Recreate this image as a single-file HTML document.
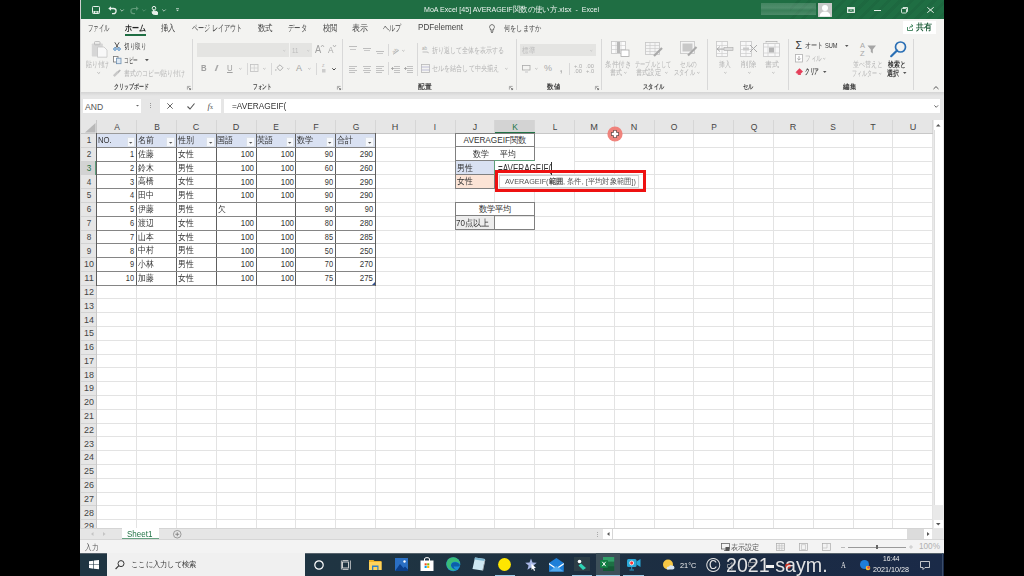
<!DOCTYPE html><html><head><meta charset="utf-8"><style>
*{margin:0;padding:0;box-sizing:border-box}
html,body{width:1024px;height:576px;overflow:hidden;background:#000;font-family:"Liberation Sans",sans-serif;color:#333}
.a{position:absolute}
.t{position:absolute;white-space:nowrap}
svg{position:absolute;overflow:visible}
</style></head><body>
<div class="a" style="left:80.00px;top:0.00px;width:864.00px;height:576.00px;background:#f3f3f1"></div>
<div class="a" style="left:80.00px;top:0.00px;width:864.00px;height:19.00px;background:#1f6e43"></div>
<div class="a" style="left:790.00px;top:0.00px;width:154.00px;height:19.00px;background:repeating-linear-gradient(135deg,rgba(0,0,0,0) 0 5px,rgba(0,0,0,0.05) 5px 8px)"></div>
<svg style="left:92.00px;top:6.00px;" width="8" height="8" viewBox="0 0 8 8"><rect x="0.5" y="0.5" width="7" height="7" rx="0.8" fill="none" stroke="#e8f0ea" stroke-width="1"/><rect x="1.5" y="5" width="5" height="2.5" fill="#e8f0ea"/><rect x="3" y="5.6" width="0.9" height="1.2" fill="#1f6e43"/><rect x="4.3" y="5.6" width="0.9" height="1.2" fill="#1f6e43"/></svg>
<svg style="left:108.00px;top:6.00px;" width="9" height="9" viewBox="0 0 9 9"><path d="M2.5 2.5 H5.5 A2.6 2.6 0 0 1 5.5 7.7 H4" fill="none" stroke="#e8f0ea" stroke-width="1.3"/><path d="M0.3 2.5 L3 0.2 L3 4.8 Z" fill="#e8f0ea"/></svg>
<svg style="left:120.00px;top:8.50px;" width="4" height="3" viewBox="0 0 4 3"><path d="M0.3 0.5 L2 2.2 L3.7 0.5" fill="none" stroke="#cfe0d5" stroke-width="0.8"/></svg>
<svg style="left:130.00px;top:6.00px;" width="9" height="9" viewBox="0 0 9 9"><path d="M6.5 2.5 H3.5 A2.6 2.6 0 0 0 3.5 7.7 H5" fill="none" stroke="#5f9a78" stroke-width="1.2"/><path d="M8.7 2.5 L6 0.2 L6 4.8 Z" fill="#5f9a78"/></svg>
<svg style="left:142.00px;top:8.50px;" width="4" height="3" viewBox="0 0 4 3"><path d="M0.3 0.5 L2 2.2 L3.7 0.5" fill="none" stroke="#5f9a78" stroke-width="0.8"/></svg>
<svg style="left:150.50px;top:5.50px;" width="7" height="9" viewBox="0 0 7 9"><circle cx="3" cy="2.2" r="1.8" fill="none" stroke="#e8f0ea" stroke-width="1"/><path d="M2.4 3.5 V8 M1 5.5 Q1 8.5 3.5 8.5 H6.5 V6 Q5 5 3 5" fill="#e8f0ea" stroke="#e8f0ea" stroke-width="1"/></svg>
<svg style="left:162.00px;top:8.50px;" width="4" height="3" viewBox="0 0 4 3"><path d="M0.3 0.5 L2 2.2 L3.7 0.5" fill="none" stroke="#cfe0d5" stroke-width="0.8"/></svg>
<svg style="left:175.50px;top:8.00px;" width="3" height="4" viewBox="0 0 3 4"><rect x="0" y="0" width="3" height="0.7" fill="#cfe0d5"/><path d="M0 1.8 H3 L1.5 3.3 Z" fill="#cfe0d5"/></svg>
<div class="t" id="m0" style="left:424.00px;top:4.74px;font-size:7.6px;line-height:9.12px;color:#f0f5f2;;transform-origin:0 50%;transform:scaleX(0.9309);">MoA Excel [45] AVERAGEIF関数の使い方.xlsx&nbsp; -&nbsp; Excel</div>
<div class="a" style="left:761.00px;top:3.00px;width:55.00px;height:12.00px;background:linear-gradient(180deg,rgba(255,255,255,0.16),rgba(255,255,255,0.22) 40%,rgba(255,255,255,0.12) 60%,rgba(255,255,255,0.2));filter:blur(0.5px)"></div>
<div class="a" style="left:817.50px;top:3.00px;width:14.00px;height:13.50px;background:#c9c9c9"></div>
<svg style="left:817.50px;top:3.00px;" width="14" height="13.5" viewBox="0 0 14 13.5"><circle cx="7" cy="5" r="3" fill="#fff"/><path d="M1.5 13.5 Q2 8.5 7 8.5 Q12 8.5 12.5 13.5 Z" fill="#fff"/></svg>
<svg style="left:847.00px;top:7.00px;" width="8" height="6" viewBox="0 0 8 6"><rect x="0.5" y="0.5" width="7" height="5" fill="#e8f0ea" stroke="#e8f0ea" stroke-width="0.9"/><rect x="1.3" y="2.3" width="5.4" height="2.5" fill="#1f6e43"/><path d="M2.6 4 L4 2.8 L5.4 4" fill="none" stroke="#e8f0ea" stroke-width="0.7"/></svg>
<div class="a" style="left:874.00px;top:9.50px;width:7.00px;height:0.90px;background:#e8f0ea"></div>
<svg style="left:900.50px;top:7.00px;" width="7" height="6" viewBox="0 0 7 6"><rect x="0.5" y="1.5" width="5" height="4.5" rx="0.8" fill="none" stroke="#e8f0ea" stroke-width="0.9"/><path d="M1.8 0.5 H6.5 V4.8" fill="none" stroke="#e8f0ea" stroke-width="0.9"/></svg>
<svg style="left:927.00px;top:7.00px;" width="7" height="6" viewBox="0 0 7 6"><path d="M0.3 0.3 L6.7 5.7 M6.7 0.3 L0.3 5.7" stroke="#e8f0ea" stroke-width="1"/></svg>
<div class="t" id="m1" style="left:87.80px;top:23.20px;font-size:8.5px;line-height:10.20px;color:#444;font-weight:normal;transform-origin:0 50%;transform:scaleX(0.5972);">ファイル</div>
<div class="t" id="m2" style="left:125.30px;top:23.20px;font-size:8.5px;line-height:10.20px;color:#222;font-weight:bold;transform-origin:0 50%;transform:scaleX(0.7778);">ホーム</div>
<div class="t" id="m3" style="left:160.50px;top:23.20px;font-size:8.5px;line-height:10.20px;color:#444;font-weight:normal;transform-origin:0 50%;transform:scaleX(0.8056);">挿入</div>
<div class="t" id="m4" style="left:191.70px;top:23.20px;font-size:8.5px;line-height:10.20px;color:#444;font-weight:normal;transform-origin:0 50%;transform:scaleX(0.6757);">ページ レイアウト</div>
<div class="t" id="m5" style="left:257.70px;top:23.20px;font-size:8.5px;line-height:10.20px;color:#444;font-weight:normal;transform-origin:0 50%;transform:scaleX(0.8333);">数式</div>
<div class="t" id="m6" style="left:288.00px;top:23.20px;font-size:8.5px;line-height:10.20px;color:#444;font-weight:normal;transform-origin:0 50%;transform:scaleX(0.7037);">データ</div>
<div class="t" id="m7" style="left:322.50px;top:23.20px;font-size:8.5px;line-height:10.20px;color:#444;font-weight:normal;transform-origin:0 50%;transform:scaleX(0.8056);">校閲</div>
<div class="t" id="m8" style="left:352.00px;top:23.20px;font-size:8.5px;line-height:10.20px;color:#444;font-weight:normal;transform-origin:0 50%;transform:scaleX(0.8889);">表示</div>
<div class="t" id="m9" style="left:382.50px;top:23.20px;font-size:8.5px;line-height:10.20px;color:#444;font-weight:normal;transform-origin:0 50%;transform:scaleX(0.6852);">ヘルプ</div>
<div class="a" style="left:125.30px;top:34.00px;width:21.00px;height:1.60px;background:#1f6e43"></div>
<div class="t" id="m10" style="left:418.00px;top:23.32px;font-size:8.3px;line-height:9.96px;color:#444;;transform-origin:0 50%;transform:scaleX(0.9783);">PDFelement</div>
<svg style="left:489.00px;top:24.00px;" width="6" height="9" viewBox="0 0 6 9"><path d="M3 0.6 A2.4 2.4 0 0 1 4.6 4.8 V6 H1.4 V4.8 A2.4 2.4 0 0 1 3 0.6 Z" fill="none" stroke="#555" stroke-width="0.8"/><path d="M1.6 7.2 H4.4 M2 8.4 H4" stroke="#555" stroke-width="0.8"/></svg>
<div class="t" id="m11" style="left:503.75px;top:23.50px;font-size:8px;line-height:9.60px;color:#444;;transform-origin:0 50%;transform:scaleX(0.7812);">何をしますか</div>
<div class="a" style="left:903.00px;top:20.50px;width:33.00px;height:13.50px;background:#fff"></div>
<svg style="left:907.00px;top:23.50px;" width="7" height="7" viewBox="0 0 7 7"><path d="M0.5 3 V6.5 H5.5 V4.5" fill="none" stroke="#1f6e43" stroke-width="0.8"/><path d="M2.5 4.5 Q2.7 1.8 5.5 1.8 M4.3 0.4 L6 1.8 L4.3 3.2" fill="none" stroke="#1f6e43" stroke-width="0.8"/></svg>
<div class="t" id="m12" style="left:916.00px;top:22.20px;font-size:8.5px;line-height:10.20px;color:#1f5e3b;font-weight:bold;transform-origin:0 50%;transform:scaleX(0.8889);">共有</div>
<svg style="left:90.50px;top:41.00px;" width="17" height="16.5" viewBox="0 0 17 16.5"><rect x="0.8" y="2.5" width="11" height="13" rx="0.8" fill="#d6d6d6"/><rect x="3.5" y="0.6" width="5.5" height="3.2" rx="0.8" fill="none" stroke="#bdbdbd" stroke-width="1"/><path d="M6.5 6 H13 L16 9 V16.2 H6.5 Z" fill="#f8f8f8" stroke="#c5c5c5" stroke-width="0.8"/></svg>
<div class="t" id="m13" style="left:86.00px;top:59.90px;font-size:7.5px;line-height:9.00px;color:#b0b0b0;;transform-origin:0 50%;transform:scaleX(0.7281);">貼り付け</div>
<svg style="left:96.80px;top:72.15px;" width="3.4" height="1.7" viewBox="0 0 3.4 1.7"><path d="M0.3 0.3 L1.7 1.5 L3.1 0.3" fill="none" stroke="#aaa" stroke-width="0.8"/></svg>
<svg style="left:113.00px;top:42.00px;" width="8" height="8.5" viewBox="0 0 8 8.5"><path d="M1.8 0.3 L5.2 5.8 M6.2 0.3 L2.8 5.8" stroke="#444" stroke-width="0.9"/><circle cx="2" cy="7" r="1.3" fill="none" stroke="#3c7fc0" stroke-width="0.9"/><circle cx="6" cy="7" r="1.3" fill="none" stroke="#3c7fc0" stroke-width="0.9"/></svg>
<div class="t" id="m14" style="left:123.80px;top:41.70px;font-size:7.5px;line-height:9.00px;color:#3a3a3a;;transform-origin:0 50%;transform:scaleX(0.6937);">切り取り</div>
<svg style="left:113.00px;top:55.50px;" width="8.5" height="8" viewBox="0 0 8.5 8"><rect x="0.5" y="0.5" width="4.5" height="5.5" fill="#fff" stroke="#777" stroke-width="0.8"/><rect x="3.5" y="2.2" width="4.5" height="5.5" fill="#dde8f3" stroke="#6f8fb0" stroke-width="0.8"/></svg>
<div class="t" id="m15" style="left:123.80px;top:55.50px;font-size:7.5px;line-height:9.00px;color:#3a3a3a;;transform-origin:0 50%;transform:scaleX(0.5833);">コピー</div>
<svg style="left:144.50px;top:59.00px;" width="4" height="2.5" viewBox="0 0 4 2.5"><path d="M0 0 H3.8 L1.9 2.2 Z" fill="#555"/></svg>
<svg style="left:113.00px;top:68.50px;" width="8.5" height="8" viewBox="0 0 8.5 8"><path d="M0.8 7.2 L4.8 3.2" stroke="#c8c8c8" stroke-width="2.4"/><path d="M4.2 2.6 L6.8 0.5 L7.8 1.5 L5.4 4.2 Z" fill="#b9b9b9"/></svg>
<div class="t" id="m16" style="left:123.80px;top:69.40px;font-size:7.5px;line-height:9.00px;color:#b4b4b4;;transform-origin:0 50%;transform:scaleX(0.7390);">書式のコピー/貼り付け</div>
<div class="t" id="m17" style="left:114.30px;top:82.88px;font-size:7.2px;line-height:8.64px;color:#444;font-weight:bold;transform-origin:0 50%;transform:scaleX(0.7041);">クリップボード</div>
<svg style="left:186.70px;top:86.00px;" width="4" height="4" viewBox="0 0 4 4"><path d="M0.4 3.6 V0.4 H3.6" fill="none" stroke="#8a8a8a" stroke-width="0.7"/><path d="M1.4 1.4 L3.6 3.6 M2.2 3.6 H3.6 V2.2" fill="none" stroke="#666" stroke-width="0.8"/></svg>
<div class="a" style="left:192.20px;top:39.00px;width:0.90px;height:50.50px;background:#d8d8d8"></div>
<div class="a" style="left:197.00px;top:43.40px;width:91.70px;height:13.40px;background:#e4e4e2"></div>
<svg style="left:282.70px;top:49.85px;" width="2.6" height="1.3" viewBox="0 0 2.6 1.3"><path d="M0.3 0.3 L1.3 1.1 L2.3000000000000003 0.3" fill="none" stroke="#c0c0c0" stroke-width="0.8"/></svg>
<div class="a" style="left:289.70px;top:43.40px;width:22.30px;height:13.40px;background:#e4e4e2"></div>
<div class="t" id="m18" style="left:292.00px;top:45.70px;font-size:7.5px;line-height:9.00px;color:#bcbcbc;;transform-origin:0 50%;transform:scaleX(0.8125);">11</div>
<svg style="left:306.70px;top:49.85px;" width="2.6" height="1.3" viewBox="0 0 2.6 1.3"><path d="M0.3 0.3 L1.3 1.1 L2.3000000000000003 0.3" fill="none" stroke="#c0c0c0" stroke-width="0.8"/></svg>
<div class="t" id="m19" style="left:315.00px;top:44.00px;font-size:10px;line-height:12.00px;color:#a0a0a0;;transform-origin:0 50%;transform:scaleX(0.9286);">A</div>
<svg style="left:320.50px;top:44.50px;" width="3" height="2" viewBox="0 0 3 2"><path d="M0 2 L1.5 0 L3 2" fill="none" stroke="#a0a0a0" stroke-width="0.7"/></svg>
<div class="t" id="m20" style="left:328.30px;top:45.10px;font-size:9px;line-height:10.80px;color:#a8a8a8;;transform-origin:0 50%;transform:scaleX(0.9167);">A</div>
<svg style="left:333.00px;top:44.50px;" width="3" height="2" viewBox="0 0 3 2"><path d="M0 0 L1.5 2 L3 0" fill="none" stroke="#a0a0a0" stroke-width="0.7"/></svg>
<div class="t" id="m21" style="left:200.70px;top:63.20px;font-size:8.5px;line-height:10.20px;color:#a0a0a0;font-weight:bold;transform-origin:0 50%;transform:scaleX(0.9167);">B</div>
<div class="t" id="m22" style="left:214.00px;top:63.20px;font-size:8.5px;line-height:10.20px;color:#a8a8a8;font-style:italic;transform-origin:0 50%;transform:scaleX(2.0000);">I</div>
<div class="t" id="m23" style="left:227.00px;top:62.90px;font-size:8.5px;line-height:10.20px;color:#a0a0a0;text-decoration:underline;transform-origin:0 50%;transform:scaleX(0.9167);">U</div>
<svg style="left:238.60px;top:67.80px;" width="2.8" height="1.4" viewBox="0 0 2.8 1.4"><path d="M0.3 0.3 L1.4 1.2 L2.5 0.3" fill="none" stroke="#b0b0b0" stroke-width="0.8"/></svg>
<div class="a" style="left:246.60px;top:63.00px;width:0.90px;height:12.00px;background:#d8d8d8"></div>
<svg style="left:249.60px;top:64.00px;" width="8.5" height="8" viewBox="0 0 8.5 8"><rect x="0.5" y="0.5" width="7.5" height="7" fill="none" stroke="#c0c0c0" stroke-width="0.8"/><path d="M4.25 0.5 V7.5 M0.5 4 H8" stroke="#cfcfcf" stroke-width="0.7"/></svg>
<svg style="left:262.60px;top:67.80px;" width="2.8" height="1.4" viewBox="0 0 2.8 1.4"><path d="M0.3 0.3 L1.4 1.2 L2.5 0.3" fill="none" stroke="#b0b0b0" stroke-width="0.8"/></svg>
<div class="a" style="left:270.50px;top:63.00px;width:0.90px;height:12.00px;background:#d8d8d8"></div>
<svg style="left:275.00px;top:63.50px;" width="9" height="8" viewBox="0 0 9 8"><path d="M2 3.5 L5 0.8 L8 3.8 L5 6.8 Z" fill="none" stroke="#a8a8a8" stroke-width="0.9"/><path d="M1 5 Q0.5 6.5 1 7" stroke="#aaa" stroke-width="0.8" fill="none"/></svg>
<svg style="left:286.60px;top:67.80px;" width="2.8" height="1.4" viewBox="0 0 2.8 1.4"><path d="M0.3 0.3 L1.4 1.2 L2.5 0.3" fill="none" stroke="#b0b0b0" stroke-width="0.8"/></svg>
<div class="t" id="m24" style="left:296.00px;top:62.90px;font-size:9px;line-height:10.80px;color:#a0a0a0;;transform-origin:0 50%;transform:scaleX(1.0000);">A</div>
<svg style="left:308.10px;top:67.80px;" width="2.8" height="1.4" viewBox="0 0 2.8 1.4"><path d="M0.3 0.3 L1.4 1.2 L2.5 0.3" fill="none" stroke="#b0b0b0" stroke-width="0.8"/></svg>
<div class="a" style="left:315.50px;top:63.00px;width:0.90px;height:12.00px;background:#d8d8d8"></div>
<svg style="left:322.00px;top:63.00px;" width="4" height="10" viewBox="0 0 4 10"><text x="0" y="4" font-size="4" fill="#aaa" font-family="Liberation Sans">Z</text><rect x="0" y="6" width="3.5" height="3.5" fill="#ccc"/></svg>
<svg style="left:331.50px;top:67.50px;" width="4" height="2.5" viewBox="0 0 4 2.5"><path d="M0.3 0.3 L2 2 L3.7 0.3" fill="none" stroke="#444" stroke-width="1"/></svg>
<div class="t" id="m25" style="left:253.40px;top:82.88px;font-size:7.2px;line-height:8.64px;color:#444;font-weight:bold;transform-origin:0 50%;transform:scaleX(0.6643);">フォント</div>
<svg style="left:336.50px;top:86.00px;" width="4" height="4" viewBox="0 0 4 4"><path d="M0.4 3.6 V0.4 H3.6" fill="none" stroke="#8a8a8a" stroke-width="0.7"/><path d="M1.4 1.4 L3.6 3.6 M2.2 3.6 H3.6 V2.2" fill="none" stroke="#666" stroke-width="0.8"/></svg>
<div class="a" style="left:342.40px;top:39.00px;width:0.90px;height:50.50px;background:#d8d8d8"></div>
<div class="a" style="left:349.30px;top:46.40px;width:8.00px;height:0.90px;background:#bdbdbd"></div>
<div class="a" style="left:350.30px;top:48.60px;width:6.00px;height:0.90px;background:#c8c8c8"></div>
<div class="a" style="left:362.80px;top:48.00px;width:8.00px;height:0.90px;background:#bdbdbd"></div>
<div class="a" style="left:363.80px;top:50.20px;width:6.00px;height:0.90px;background:#c8c8c8"></div>
<div class="a" style="left:375.80px;top:50.50px;width:8.00px;height:0.90px;background:#bdbdbd"></div>
<div class="a" style="left:376.80px;top:52.70px;width:6.00px;height:0.90px;background:#c8c8c8"></div>
<div class="a" style="left:387.50px;top:44.00px;width:0.90px;height:12.00px;background:#d8d8d8"></div>
<svg style="left:392.00px;top:46.50px;" width="8" height="8" viewBox="0 0 8 8"><text x="0" y="6" font-size="5.5" fill="#a8a8a8" font-family="Liberation Sans" transform="rotate(-35 3 4)">ab</text><path d="M1 7.5 L7 3" stroke="#b0b0b0" stroke-width="0.7"/></svg>
<svg style="left:402.20px;top:50.10px;" width="2.8" height="1.4" viewBox="0 0 2.8 1.4"><path d="M0.3 0.3 L1.4 1.2 L2.5 0.3" fill="none" stroke="#aaa" stroke-width="0.8"/></svg>
<div class="a" style="left:349.30px;top:65.80px;width:8.00px;height:0.80px;background:#c2c2c2"></div>
<div class="a" style="left:349.30px;top:67.70px;width:6.00px;height:0.80px;background:#c2c2c2"></div>
<div class="a" style="left:349.30px;top:69.60px;width:8.00px;height:0.80px;background:#c2c2c2"></div>
<div class="a" style="left:349.30px;top:71.50px;width:6.00px;height:0.80px;background:#c2c2c2"></div>
<div class="a" style="left:362.80px;top:65.80px;width:8.00px;height:0.80px;background:#c2c2c2"></div>
<div class="a" style="left:363.80px;top:67.70px;width:6.00px;height:0.80px;background:#c2c2c2"></div>
<div class="a" style="left:362.80px;top:69.60px;width:8.00px;height:0.80px;background:#c2c2c2"></div>
<div class="a" style="left:363.80px;top:71.50px;width:6.00px;height:0.80px;background:#c2c2c2"></div>
<div class="a" style="left:375.80px;top:65.80px;width:8.00px;height:0.80px;background:#c2c2c2"></div>
<div class="a" style="left:375.80px;top:67.70px;width:6.00px;height:0.80px;background:#c2c2c2"></div>
<div class="a" style="left:375.80px;top:69.60px;width:8.00px;height:0.80px;background:#c2c2c2"></div>
<div class="a" style="left:375.80px;top:71.50px;width:6.00px;height:0.80px;background:#c2c2c2"></div>
<div class="a" style="left:387.50px;top:62.00px;width:0.90px;height:13.00px;background:#d8d8d8"></div>
<div class="a" style="left:393.50px;top:65.80px;width:6.00px;height:0.80px;background:#c2c2c2"></div>
<div class="a" style="left:393.50px;top:67.70px;width:6.00px;height:0.80px;background:#c2c2c2"></div>
<div class="a" style="left:393.50px;top:69.60px;width:6.00px;height:0.80px;background:#c2c2c2"></div>
<div class="a" style="left:393.50px;top:71.50px;width:6.00px;height:0.80px;background:#c2c2c2"></div>
<svg style="left:390.50px;top:67.00px;" width="3" height="3" viewBox="0 0 3 3"><path d="M0 1.5 H3 M1.5 0 V3" stroke="#a0a0a0" stroke-width="0.8"/></svg>
<div class="a" style="left:406.50px;top:65.80px;width:6.00px;height:0.80px;background:#c2c2c2"></div>
<div class="a" style="left:406.50px;top:67.70px;width:6.00px;height:0.80px;background:#c2c2c2"></div>
<div class="a" style="left:406.50px;top:69.60px;width:6.00px;height:0.80px;background:#c2c2c2"></div>
<div class="a" style="left:406.50px;top:71.50px;width:6.00px;height:0.80px;background:#c2c2c2"></div>
<svg style="left:403.50px;top:67.00px;" width="3" height="3" viewBox="0 0 3 3"><path d="M0 1.5 H3 M1.5 0 V3" stroke="#a0a0a0" stroke-width="0.8"/></svg>
<div class="a" style="left:416.60px;top:43.00px;width:0.90px;height:33.00px;background:#d8d8d8"></div>
<svg style="left:421.50px;top:46.00px;" width="7" height="8" viewBox="0 0 7 8"><text x="0" y="4" font-size="4.5" fill="#aaa" font-family="Liberation Sans">ab</text><path d="M0.5 6 H5 Q6.5 6 6.5 7.2" fill="none" stroke="#aaa" stroke-width="0.7"/></svg>
<div class="t" id="m26" style="left:431.50px;top:46.30px;font-size:7.5px;line-height:9.00px;color:#b4b4b4;;transform-origin:0 50%;transform:scaleX(0.7552);">折り返して全体を表示する</div>
<svg style="left:420.50px;top:64.00px;" width="9" height="9" viewBox="0 0 9 9"><rect x="0.5" y="0.5" width="8" height="8" fill="none" stroke="#b8b8b8" stroke-width="0.8"/><path d="M0.5 3 H8.5 M0.5 6 H8.5" stroke="#b0b0d0" stroke-width="0.8"/></svg>
<div class="t" id="m27" style="left:431.50px;top:64.00px;font-size:7.5px;line-height:9.00px;color:#b4b4b4;;transform-origin:0 50%;transform:scaleX(0.7614);">セルを結合して中央揃え</div>
<svg style="left:504.60px;top:68.10px;" width="2.8" height="1.4" viewBox="0 0 2.8 1.4"><path d="M0.3 0.3 L1.4 1.2 L2.5 0.3" fill="none" stroke="#aaa" stroke-width="0.8"/></svg>
<div class="t" id="m28" style="left:417.60px;top:82.98px;font-size:7.2px;line-height:8.64px;color:#444;font-weight:bold;transform-origin:0 50%;transform:scaleX(0.9571);">配置</div>
<svg style="left:509.00px;top:86.00px;" width="4" height="4" viewBox="0 0 4 4"><path d="M0.4 3.6 V0.4 H3.6" fill="none" stroke="#8a8a8a" stroke-width="0.7"/><path d="M1.4 1.4 L3.6 3.6 M2.2 3.6 H3.6 V2.2" fill="none" stroke="#666" stroke-width="0.8"/></svg>
<div class="a" style="left:515.60px;top:39.00px;width:0.90px;height:50.50px;background:#d8d8d8"></div>
<div class="a" style="left:520.20px;top:43.80px;width:75.80px;height:12.70px;background:#e4e4e2"></div>
<div class="t" id="m29" style="left:522.00px;top:45.70px;font-size:7.5px;line-height:9.00px;color:#bdbdbd;;transform-origin:0 50%;transform:scaleX(0.8125);">標準</div>
<svg style="left:590.20px;top:49.85px;" width="2.6" height="1.3" viewBox="0 0 2.6 1.3"><path d="M0.3 0.3 L1.3 1.1 L2.3000000000000003 0.3" fill="none" stroke="#c0c0c0" stroke-width="0.8"/></svg>
<svg style="left:522.00px;top:64.50px;" width="9" height="8" viewBox="0 0 9 8"><rect x="0.5" y="0.5" width="7.5" height="4.5" fill="none" stroke="#aaa" stroke-width="0.8"/><rect x="3" y="5.5" width="3" height="2.5" fill="#ddd"/></svg>
<svg style="left:535.10px;top:67.80px;" width="2.8" height="1.4" viewBox="0 0 2.8 1.4"><path d="M0.3 0.3 L1.4 1.2 L2.5 0.3" fill="none" stroke="#aaa" stroke-width="0.8"/></svg>
<div class="t" id="m30" style="left:544.00px;top:63.10px;font-size:9px;line-height:10.80px;color:#a8a8a8;;transform-origin:0 50%;transform:scaleX(1.0000);">%</div>
<div class="t" id="m31" style="left:560.00px;top:62.50px;font-size:10px;line-height:12.00px;color:#a8a8a8;font-weight:bold;transform-origin:0 50%;transform:scaleX(0.8333);">,</div>
<div class="a" style="left:569.00px;top:63.00px;width:0.90px;height:12.00px;background:#d8d8d8"></div>
<div class="t" id="m32" style="left:574.00px;top:63.00px;font-size:5px;line-height:6.00px;color:#aaa;;transform-origin:0 50%;transform:scaleX(1.1429);">+.0</div>
<div class="t" id="m33" style="left:574.00px;top:67.50px;font-size:5px;line-height:6.00px;color:#aaa;;transform-origin:0 50%;transform:scaleX(1.1429);">.00</div>
<div class="t" id="m34" style="left:586.00px;top:63.00px;font-size:5px;line-height:6.00px;color:#aaa;;transform-origin:0 50%;transform:scaleX(1.1429);">.00</div>
<div class="t" id="m35" style="left:586.00px;top:67.50px;font-size:5px;line-height:6.00px;color:#aaa;;transform-origin:0 50%;transform:scaleX(1.1429);">+.0</div>
<div class="t" id="m36" style="left:547.00px;top:83.48px;font-size:7.2px;line-height:8.64px;color:#444;font-weight:bold;transform-origin:0 50%;transform:scaleX(0.9286);">数値</div>
<svg style="left:595.00px;top:86.00px;" width="4" height="4" viewBox="0 0 4 4"><path d="M0.4 3.6 V0.4 H3.6" fill="none" stroke="#8a8a8a" stroke-width="0.7"/><path d="M1.4 1.4 L3.6 3.6 M2.2 3.6 H3.6 V2.2" fill="none" stroke="#666" stroke-width="0.8"/></svg>
<div class="a" style="left:600.90px;top:39.00px;width:0.90px;height:50.50px;background:#d8d8d8"></div>
<svg style="left:610.50px;top:41.00px;" width="19" height="16" viewBox="0 0 19 16"><rect x="0.5" y="0.5" width="14" height="12" fill="#fbfbfb" stroke="#c5c5c5" stroke-width="0.8"/><path d="M0.5 4.5 H14.5 M0.5 8.5 H14.5 M5 0.5 V12.5 M10 0.5 V12.5" stroke="#d0d0d0" stroke-width="0.7"/><rect x="6" y="1" width="3" height="11" fill="#b9b9b9"/><rect x="10" y="9" width="8" height="6.5" fill="#fff" stroke="#aaa" stroke-width="0.8"/></svg>
<div class="t" id="m37" style="left:605.00px;top:59.50px;font-size:7.5px;line-height:9.00px;color:#b4b4b4;;transform-origin:0 50%;transform:scaleX(0.8125);">条件付き</div>
<div class="t" id="m38" style="left:610.00px;top:68.00px;font-size:7.5px;line-height:9.00px;color:#b4b4b4;;transform-origin:0 50%;transform:scaleX(0.7500);">書式</div>
<svg style="left:623.60px;top:72.10px;" width="2.8" height="1.4" viewBox="0 0 2.8 1.4"><path d="M0.3 0.3 L1.4 1.2 L2.5 0.3" fill="none" stroke="#aaa" stroke-width="0.8"/></svg>
<svg style="left:645.00px;top:42.00px;" width="19" height="15" viewBox="0 0 19 15"><rect x="0.5" y="0.5" width="14" height="12" fill="#f4f4f4" stroke="#c5c5c5" stroke-width="0.8"/><path d="M0.5 3.5 H14.5 M0.5 6.5 H14.5 M0.5 9.5 H14.5 M5 0.5 V12.5 M10 0.5 V12.5" stroke="#ccc" stroke-width="0.7"/><path d="M9 14 L17 6" stroke="#a9a9a9" stroke-width="2.2"/></svg>
<div class="t" id="m39" style="left:635.00px;top:59.50px;font-size:7.5px;line-height:9.00px;color:#b4b4b4;;transform-origin:0 50%;transform:scaleX(0.6518);">テーブルとして</div>
<div class="t" id="m40" style="left:636.00px;top:68.00px;font-size:7.5px;line-height:9.00px;color:#b4b4b4;;transform-origin:0 50%;transform:scaleX(0.7812);">書式設定</div>
<svg style="left:665.10px;top:72.10px;" width="2.8" height="1.4" viewBox="0 0 2.8 1.4"><path d="M0.3 0.3 L1.4 1.2 L2.5 0.3" fill="none" stroke="#aaa" stroke-width="0.8"/></svg>
<svg style="left:680.00px;top:41.00px;" width="18" height="16" viewBox="0 0 18 16"><rect x="0.5" y="0.5" width="14" height="12" fill="#f4f4f4" stroke="#c5c5c5" stroke-width="0.8"/><rect x="2.5" y="2.5" width="10" height="8" fill="#c8c8c8"/><path d="M8 14.5 L16.5 6" stroke="#a9a9a9" stroke-width="2.2"/></svg>
<div class="t" id="m41" style="left:680.00px;top:59.50px;font-size:7.5px;line-height:9.00px;color:#b4b4b4;;transform-origin:0 50%;transform:scaleX(0.7083);">セルの</div>
<div class="t" id="m42" style="left:674.00px;top:68.00px;font-size:7.5px;line-height:9.00px;color:#b4b4b4;;transform-origin:0 50%;transform:scaleX(0.6562);">スタイル</div>
<svg style="left:696.60px;top:72.10px;" width="2.8" height="1.4" viewBox="0 0 2.8 1.4"><path d="M0.3 0.3 L1.4 1.2 L2.5 0.3" fill="none" stroke="#aaa" stroke-width="0.8"/></svg>
<div class="t" id="m43" style="left:643.00px;top:83.48px;font-size:7.2px;line-height:8.64px;color:#444;font-weight:bold;transform-origin:0 50%;transform:scaleX(0.7500);">スタイル</div>
<div class="a" style="left:707.40px;top:39.00px;width:0.90px;height:50.50px;background:#d8d8d8"></div>
<svg style="left:715.70px;top:40.70px;" width="18" height="16" viewBox="0 0 18 16"><rect x="0.5" y="0.5" width="11" height="15" fill="#f8f8f8" stroke="#c8c8c8" stroke-width="0.8"/><path d="M0.5 4.5 H11.5 M0.5 8.5 H11.5 M0.5 12.5 H11.5 M6 0.5 V15.5" stroke="#cfcfcf" stroke-width="0.7"/><path d="M1 8 H17 M1 8 L4 5.5 M1 8 L4 10.5" stroke="#aaa" stroke-width="0.9" fill="none"/><rect x="8" y="6.5" width="9" height="3" fill="#ddd" stroke="#aaa" stroke-width="0.6"/></svg>
<div class="t" id="m44" style="left:719.00px;top:60.10px;font-size:7.5px;line-height:9.00px;color:#b4b4b4;;transform-origin:0 50%;transform:scaleX(0.7188);">挿入</div>
<svg style="left:723.60px;top:71.80px;" width="2.8" height="1.4" viewBox="0 0 2.8 1.4"><path d="M0.3 0.3 L1.4 1.2 L2.5 0.3" fill="none" stroke="#aaa" stroke-width="0.8"/></svg>
<svg style="left:740.00px;top:40.70px;" width="18" height="16" viewBox="0 0 18 16"><rect x="0.5" y="0.5" width="11" height="15" fill="#f8f8f8" stroke="#c8c8c8" stroke-width="0.8"/><path d="M0.5 4.5 H11.5 M0.5 8.5 H11.5 M0.5 12.5 H11.5 M6 0.5 V15.5" stroke="#cfcfcf" stroke-width="0.7"/><path d="M10 4 L17 11 M17 4 L10 11" stroke="#aaa" stroke-width="1"/><rect x="3" y="6.5" width="6" height="3" fill="#ccc"/></svg>
<div class="t" id="m45" style="left:741.00px;top:60.10px;font-size:7.5px;line-height:9.00px;color:#b4b4b4;;transform-origin:0 50%;transform:scaleX(0.9375);">削除</div>
<svg style="left:747.60px;top:71.80px;" width="2.8" height="1.4" viewBox="0 0 2.8 1.4"><path d="M0.3 0.3 L1.4 1.2 L2.5 0.3" fill="none" stroke="#aaa" stroke-width="0.8"/></svg>
<svg style="left:763.00px;top:40.70px;" width="18" height="16" viewBox="0 0 18 16"><rect x="0.5" y="2.5" width="16" height="13" fill="#f8f8f8" stroke="#c8c8c8" stroke-width="0.8"/><path d="M0.5 6 H16.5 M0.5 12 H16.5 M5 2.5 V15.5 M12 2.5 V15.5" stroke="#cfcfcf" stroke-width="0.7"/><rect x="6" y="6.5" width="5" height="5" fill="#b3b3b3"/><path d="M3 0.5 H14 M3 0 V1.5 M14 0 V1.5" stroke="#aaa" stroke-width="0.7"/></svg>
<div class="t" id="m46" style="left:765.00px;top:60.10px;font-size:7.5px;line-height:9.00px;color:#b4b4b4;;transform-origin:0 50%;transform:scaleX(0.8750);">書式</div>
<svg style="left:771.60px;top:71.80px;" width="2.8" height="1.4" viewBox="0 0 2.8 1.4"><path d="M0.3 0.3 L1.4 1.2 L2.5 0.3" fill="none" stroke="#aaa" stroke-width="0.8"/></svg>
<div class="t" id="m47" style="left:742.70px;top:82.78px;font-size:7.2px;line-height:8.64px;color:#444;font-weight:bold;transform-origin:0 50%;transform:scaleX(0.7500);">セル</div>
<div class="a" style="left:788.40px;top:39.00px;width:0.90px;height:50.50px;background:#d8d8d8"></div>
<div class="t" id="m48" style="left:795.40px;top:38.90px;font-size:10.5px;line-height:12.60px;color:#333;;transform-origin:0 50%;transform:scaleX(1.0000);">Σ</div>
<div class="t" id="m49" style="left:805.20px;top:40.90px;font-size:7.5px;line-height:9.00px;color:#3a3a3a;;transform-origin:0 50%;transform:scaleX(0.7628);">オート SUM</div>
<svg style="left:844.50px;top:44.50px;" width="3.5" height="2.2" viewBox="0 0 3.5 2.2"><path d="M0 0 H3.5 L1.75 2 Z" fill="#555"/></svg>
<svg style="left:795.00px;top:54.00px;" width="8" height="8.5" viewBox="0 0 8 8.5"><rect x="0.5" y="0.5" width="7" height="7.5" fill="#fff" stroke="#b0b0b0" stroke-width="0.8"/><path d="M4 2 V6 M2.3 4.5 L4 6.2 L5.7 4.5" fill="none" stroke="#999" stroke-width="0.8"/></svg>
<div class="t" id="m50" style="left:805.00px;top:53.80px;font-size:7.5px;line-height:9.00px;color:#b4b4b4;;transform-origin:0 50%;transform:scaleX(0.7083);">フィル</div>
<svg style="left:822.70px;top:57.85px;" width="2.6" height="1.3" viewBox="0 0 2.6 1.3"><path d="M0.3 0.3 L1.3 1.1 L2.3000000000000003 0.3" fill="none" stroke="#b0b0b0" stroke-width="0.8"/></svg>
<svg style="left:795.00px;top:67.00px;" width="9" height="8" viewBox="0 0 9 8"><path d="M0.8 5 L4.5 1.2 L8 4.5 L4.5 8 Z" fill="#e4405a"/><path d="M0.8 5 L3 7.5 H6" fill="none" stroke="#e4405a" stroke-width="0.8"/></svg>
<div class="t" id="m51" style="left:805.00px;top:67.00px;font-size:7.5px;line-height:9.00px;color:#3a3a3a;font-weight:bold;transform-origin:0 50%;transform:scaleX(0.5833);">クリア</div>
<svg style="left:822.50px;top:70.50px;" width="3.5" height="2.2" viewBox="0 0 3.5 2.2"><path d="M0 0 H3.5 L1.75 2 Z" fill="#555"/></svg>
<svg style="left:859.80px;top:41.00px;" width="17" height="15.5" viewBox="0 0 17 15.5"><text x="0" y="7" font-size="7.5" fill="#a8a8a8" font-family="Liberation Sans">A</text><text x="0" y="15" font-size="7.5" fill="#a8a8a8" font-family="Liberation Sans">Z</text><path d="M7.5 4.5 H16 L12.8 8.5 V12.5 L10.8 11 V8.5 Z" fill="#a5a5a5"/></svg>
<div class="t" id="m52" style="left:853.00px;top:60.00px;font-size:7.5px;line-height:9.00px;color:#b4b4b4;;transform-origin:0 50%;transform:scaleX(0.7500);">並べ替えと</div>
<div class="t" id="m53" style="left:852.00px;top:68.50px;font-size:7.5px;line-height:9.00px;color:#b4b4b4;;transform-origin:0 50%;transform:scaleX(0.6250);">フィルター</div>
<svg style="left:879.20px;top:72.55px;" width="2.6" height="1.3" viewBox="0 0 2.6 1.3"><path d="M0.3 0.3 L1.3 1.1 L2.3000000000000003 0.3" fill="none" stroke="#b0b0b0" stroke-width="0.8"/></svg>
<svg style="left:889.50px;top:40.50px;" width="17" height="16" viewBox="0 0 17 16"><circle cx="10.5" cy="6" r="5" fill="none" stroke="#2a6fb5" stroke-width="1.7"/><path d="M7 9.5 L1.2 15.2" stroke="#2a6fb5" stroke-width="2.2" stroke-linecap="round"/></svg>
<div class="t" id="m54" style="left:888.00px;top:60.00px;font-size:7.5px;line-height:9.00px;color:#3a3a3a;font-weight:bold;transform-origin:0 50%;transform:scaleX(0.7292);">検索と</div>
<div class="t" id="m55" style="left:887.00px;top:68.50px;font-size:7.5px;line-height:9.00px;color:#3a3a3a;font-weight:bold;transform-origin:0 50%;transform:scaleX(0.7500);">選択</div>
<svg style="left:902.50px;top:72.20px;" width="3.5" height="2.2" viewBox="0 0 3.5 2.2"><path d="M0 0 H3.5 L1.75 2 Z" fill="#555"/></svg>
<div class="t" id="m56" style="left:843.40px;top:82.78px;font-size:7.2px;line-height:8.64px;color:#444;font-weight:bold;transform-origin:0 50%;transform:scaleX(0.9286);">編集</div>
<div class="a" style="left:913.30px;top:39.00px;width:0.90px;height:50.50px;background:#d8d8d8"></div>
<svg style="left:933.00px;top:86.00px;" width="6" height="3.5" viewBox="0 0 6 3.5"><path d="M0.5 3 L3 0.6 L5.5 3" fill="none" stroke="#444" stroke-width="0.9"/></svg>
<div class="a" style="left:80.00px;top:92.00px;width:864.00px;height:28.00px;background:#e6e6e6"></div>
<div class="a" style="left:80.00px;top:91.60px;width:864.00px;height:4.00px;background:linear-gradient(180deg,#d4d4d4,#e6e6e6)"></div>
<div class="a" style="left:83.20px;top:98.60px;width:58.00px;height:14.60px;background:#fff"></div>
<div class="t" id="m57" style="left:85.00px;top:101.64px;font-size:8.6px;line-height:10.32px;color:#555;;transform-origin:0 50%;transform:scaleX(1.0000);">AND</div>
<svg style="left:135.50px;top:104.80px;" width="3" height="2" viewBox="0 0 3 2"><path d="M0 0 H3 L1.5 1.6 Z" fill="#666"/></svg>
<div class="a" style="left:149.60px;top:102.50px;width:0.90px;height:0.90px;background:#999"></div>
<div class="a" style="left:149.60px;top:104.50px;width:0.90px;height:0.90px;background:#999"></div>
<div class="a" style="left:149.60px;top:106.50px;width:0.90px;height:0.90px;background:#999"></div>
<div class="a" style="left:160.00px;top:98.60px;width:61.40px;height:14.60px;background:#fff"></div>
<svg style="left:166.50px;top:103.00px;" width="6" height="6" viewBox="0 0 6 6"><path d="M0.3 0.3 L5.7 5.7 M5.7 0.3 L0.3 5.7" stroke="#555" stroke-width="0.9"/></svg>
<svg style="left:187.00px;top:102.50px;" width="8" height="6.5" viewBox="0 0 8 6.5"><path d="M0.5 3.5 L3 6 L7.5 0.5" fill="none" stroke="#555" stroke-width="1.1"/></svg>
<div class="t" id="m58" style="left:207.50px;top:100.60px;font-size:9px;line-height:10.80px;color:#555;font-family:'Liberation Serif',serif;"><i>f</i><span style="font-size:6px">x</span></div>
<div class="a" style="left:224.00px;top:98.60px;width:716.00px;height:14.60px;background:#fff"></div>
<div class="t" id="m59" style="left:231.50px;top:100.90px;font-size:8.5px;line-height:10.20px;color:#333;;transform-origin:0 50%;transform:scaleX(0.9732);">=AVERAGEIF(</div>
<svg style="left:934.00px;top:104.80px;" width="4.5" height="2.8" viewBox="0 0 4.5 2.8"><path d="M0.4 0.4 L2.25 2.3 L4.1 0.4" fill="none" stroke="#555" stroke-width="0.9"/></svg>
<div class="a" style="left:80.00px;top:120.00px;width:852.60px;height:13.20px;background:#e6e6e6"></div>
<div class="a" style="left:80.00px;top:133.20px;width:16.80px;height:395.20px;background:#e6e6e6"></div>
<div class="a" style="left:96.80px;top:133.20px;width:835.80px;height:395.20px;background:#fff"></div>
<div class="a" style="left:494.80px;top:120.30px;width:39.80px;height:12.90px;background:#d3d3d3"></div>
<div class="a" style="left:80.00px;top:160.78px;width:16.80px;height:13.79px;background:#d3d3d3"></div>
<div class="a" style="left:136.10px;top:133.20px;width:1.00px;height:395.20px;background:#e3e3e3"></div>
<div class="a" style="left:136.10px;top:120.30px;width:1.00px;height:12.90px;background:#d6d6d6"></div>
<div class="a" style="left:175.90px;top:133.20px;width:1.00px;height:395.20px;background:#e3e3e3"></div>
<div class="a" style="left:175.90px;top:120.30px;width:1.00px;height:12.90px;background:#d6d6d6"></div>
<div class="a" style="left:215.70px;top:133.20px;width:1.00px;height:395.20px;background:#e3e3e3"></div>
<div class="a" style="left:215.70px;top:120.30px;width:1.00px;height:12.90px;background:#d6d6d6"></div>
<div class="a" style="left:255.50px;top:133.20px;width:1.00px;height:395.20px;background:#e3e3e3"></div>
<div class="a" style="left:255.50px;top:120.30px;width:1.00px;height:12.90px;background:#d6d6d6"></div>
<div class="a" style="left:295.30px;top:133.20px;width:1.00px;height:395.20px;background:#e3e3e3"></div>
<div class="a" style="left:295.30px;top:120.30px;width:1.00px;height:12.90px;background:#d6d6d6"></div>
<div class="a" style="left:335.10px;top:133.20px;width:1.00px;height:395.20px;background:#e3e3e3"></div>
<div class="a" style="left:335.10px;top:120.30px;width:1.00px;height:12.90px;background:#d6d6d6"></div>
<div class="a" style="left:374.90px;top:133.20px;width:1.00px;height:395.20px;background:#e3e3e3"></div>
<div class="a" style="left:374.90px;top:120.30px;width:1.00px;height:12.90px;background:#d6d6d6"></div>
<div class="a" style="left:414.70px;top:133.20px;width:1.00px;height:395.20px;background:#e3e3e3"></div>
<div class="a" style="left:414.70px;top:120.30px;width:1.00px;height:12.90px;background:#d6d6d6"></div>
<div class="a" style="left:454.50px;top:133.20px;width:1.00px;height:395.20px;background:#e3e3e3"></div>
<div class="a" style="left:454.50px;top:120.30px;width:1.00px;height:12.90px;background:#d6d6d6"></div>
<div class="a" style="left:494.30px;top:133.20px;width:1.00px;height:395.20px;background:#e3e3e3"></div>
<div class="a" style="left:494.30px;top:120.30px;width:1.00px;height:12.90px;background:#d6d6d6"></div>
<div class="a" style="left:534.10px;top:133.20px;width:1.00px;height:395.20px;background:#e3e3e3"></div>
<div class="a" style="left:534.10px;top:120.30px;width:1.00px;height:12.90px;background:#d6d6d6"></div>
<div class="a" style="left:573.90px;top:133.20px;width:1.00px;height:395.20px;background:#e3e3e3"></div>
<div class="a" style="left:573.90px;top:120.30px;width:1.00px;height:12.90px;background:#d6d6d6"></div>
<div class="a" style="left:613.70px;top:133.20px;width:1.00px;height:395.20px;background:#e3e3e3"></div>
<div class="a" style="left:613.70px;top:120.30px;width:1.00px;height:12.90px;background:#d6d6d6"></div>
<div class="a" style="left:653.50px;top:133.20px;width:1.00px;height:395.20px;background:#e3e3e3"></div>
<div class="a" style="left:653.50px;top:120.30px;width:1.00px;height:12.90px;background:#d6d6d6"></div>
<div class="a" style="left:693.30px;top:133.20px;width:1.00px;height:395.20px;background:#e3e3e3"></div>
<div class="a" style="left:693.30px;top:120.30px;width:1.00px;height:12.90px;background:#d6d6d6"></div>
<div class="a" style="left:733.10px;top:133.20px;width:1.00px;height:395.20px;background:#e3e3e3"></div>
<div class="a" style="left:733.10px;top:120.30px;width:1.00px;height:12.90px;background:#d6d6d6"></div>
<div class="a" style="left:772.90px;top:133.20px;width:1.00px;height:395.20px;background:#e3e3e3"></div>
<div class="a" style="left:772.90px;top:120.30px;width:1.00px;height:12.90px;background:#d6d6d6"></div>
<div class="a" style="left:812.70px;top:133.20px;width:1.00px;height:395.20px;background:#e3e3e3"></div>
<div class="a" style="left:812.70px;top:120.30px;width:1.00px;height:12.90px;background:#d6d6d6"></div>
<div class="a" style="left:852.50px;top:133.20px;width:1.00px;height:395.20px;background:#e3e3e3"></div>
<div class="a" style="left:852.50px;top:120.30px;width:1.00px;height:12.90px;background:#d6d6d6"></div>
<div class="a" style="left:892.30px;top:133.20px;width:1.00px;height:395.20px;background:#e3e3e3"></div>
<div class="a" style="left:892.30px;top:120.30px;width:1.00px;height:12.90px;background:#d6d6d6"></div>
<div class="a" style="left:932.10px;top:133.20px;width:1.00px;height:395.20px;background:#e3e3e3"></div>
<div class="a" style="left:932.10px;top:120.30px;width:1.00px;height:12.90px;background:#d6d6d6"></div>
<div class="a" style="left:96.80px;top:146.79px;width:835.80px;height:1.00px;background:#e3e3e3"></div>
<div class="a" style="left:80.00px;top:146.79px;width:16.80px;height:1.00px;background:#d2d2d2"></div>
<div class="a" style="left:96.80px;top:160.58px;width:835.80px;height:1.00px;background:#e3e3e3"></div>
<div class="a" style="left:80.00px;top:160.58px;width:16.80px;height:1.00px;background:#d2d2d2"></div>
<div class="a" style="left:96.80px;top:174.37px;width:835.80px;height:1.00px;background:#e3e3e3"></div>
<div class="a" style="left:80.00px;top:174.37px;width:16.80px;height:1.00px;background:#d2d2d2"></div>
<div class="a" style="left:96.80px;top:188.16px;width:835.80px;height:1.00px;background:#e3e3e3"></div>
<div class="a" style="left:80.00px;top:188.16px;width:16.80px;height:1.00px;background:#d2d2d2"></div>
<div class="a" style="left:96.80px;top:201.95px;width:835.80px;height:1.00px;background:#e3e3e3"></div>
<div class="a" style="left:80.00px;top:201.95px;width:16.80px;height:1.00px;background:#d2d2d2"></div>
<div class="a" style="left:96.80px;top:215.74px;width:835.80px;height:1.00px;background:#e3e3e3"></div>
<div class="a" style="left:80.00px;top:215.74px;width:16.80px;height:1.00px;background:#d2d2d2"></div>
<div class="a" style="left:96.80px;top:229.53px;width:835.80px;height:1.00px;background:#e3e3e3"></div>
<div class="a" style="left:80.00px;top:229.53px;width:16.80px;height:1.00px;background:#d2d2d2"></div>
<div class="a" style="left:96.80px;top:243.32px;width:835.80px;height:1.00px;background:#e3e3e3"></div>
<div class="a" style="left:80.00px;top:243.32px;width:16.80px;height:1.00px;background:#d2d2d2"></div>
<div class="a" style="left:96.80px;top:257.11px;width:835.80px;height:1.00px;background:#e3e3e3"></div>
<div class="a" style="left:80.00px;top:257.11px;width:16.80px;height:1.00px;background:#d2d2d2"></div>
<div class="a" style="left:96.80px;top:270.90px;width:835.80px;height:1.00px;background:#e3e3e3"></div>
<div class="a" style="left:80.00px;top:270.90px;width:16.80px;height:1.00px;background:#d2d2d2"></div>
<div class="a" style="left:96.80px;top:284.69px;width:835.80px;height:1.00px;background:#e3e3e3"></div>
<div class="a" style="left:80.00px;top:284.69px;width:16.80px;height:1.00px;background:#d2d2d2"></div>
<div class="a" style="left:96.80px;top:298.48px;width:835.80px;height:1.00px;background:#e3e3e3"></div>
<div class="a" style="left:80.00px;top:298.48px;width:16.80px;height:1.00px;background:#d2d2d2"></div>
<div class="a" style="left:96.80px;top:312.27px;width:835.80px;height:1.00px;background:#e3e3e3"></div>
<div class="a" style="left:80.00px;top:312.27px;width:16.80px;height:1.00px;background:#d2d2d2"></div>
<div class="a" style="left:96.80px;top:326.06px;width:835.80px;height:1.00px;background:#e3e3e3"></div>
<div class="a" style="left:80.00px;top:326.06px;width:16.80px;height:1.00px;background:#d2d2d2"></div>
<div class="a" style="left:96.80px;top:339.85px;width:835.80px;height:1.00px;background:#e3e3e3"></div>
<div class="a" style="left:80.00px;top:339.85px;width:16.80px;height:1.00px;background:#d2d2d2"></div>
<div class="a" style="left:96.80px;top:353.64px;width:835.80px;height:1.00px;background:#e3e3e3"></div>
<div class="a" style="left:80.00px;top:353.64px;width:16.80px;height:1.00px;background:#d2d2d2"></div>
<div class="a" style="left:96.80px;top:367.43px;width:835.80px;height:1.00px;background:#e3e3e3"></div>
<div class="a" style="left:80.00px;top:367.43px;width:16.80px;height:1.00px;background:#d2d2d2"></div>
<div class="a" style="left:96.80px;top:381.22px;width:835.80px;height:1.00px;background:#e3e3e3"></div>
<div class="a" style="left:80.00px;top:381.22px;width:16.80px;height:1.00px;background:#d2d2d2"></div>
<div class="a" style="left:96.80px;top:395.01px;width:835.80px;height:1.00px;background:#e3e3e3"></div>
<div class="a" style="left:80.00px;top:395.01px;width:16.80px;height:1.00px;background:#d2d2d2"></div>
<div class="a" style="left:96.80px;top:408.80px;width:835.80px;height:1.00px;background:#e3e3e3"></div>
<div class="a" style="left:80.00px;top:408.80px;width:16.80px;height:1.00px;background:#d2d2d2"></div>
<div class="a" style="left:96.80px;top:422.59px;width:835.80px;height:1.00px;background:#e3e3e3"></div>
<div class="a" style="left:80.00px;top:422.59px;width:16.80px;height:1.00px;background:#d2d2d2"></div>
<div class="a" style="left:96.80px;top:436.38px;width:835.80px;height:1.00px;background:#e3e3e3"></div>
<div class="a" style="left:80.00px;top:436.38px;width:16.80px;height:1.00px;background:#d2d2d2"></div>
<div class="a" style="left:96.80px;top:450.17px;width:835.80px;height:1.00px;background:#e3e3e3"></div>
<div class="a" style="left:80.00px;top:450.17px;width:16.80px;height:1.00px;background:#d2d2d2"></div>
<div class="a" style="left:96.80px;top:463.96px;width:835.80px;height:1.00px;background:#e3e3e3"></div>
<div class="a" style="left:80.00px;top:463.96px;width:16.80px;height:1.00px;background:#d2d2d2"></div>
<div class="a" style="left:96.80px;top:477.75px;width:835.80px;height:1.00px;background:#e3e3e3"></div>
<div class="a" style="left:80.00px;top:477.75px;width:16.80px;height:1.00px;background:#d2d2d2"></div>
<div class="a" style="left:96.80px;top:491.54px;width:835.80px;height:1.00px;background:#e3e3e3"></div>
<div class="a" style="left:80.00px;top:491.54px;width:16.80px;height:1.00px;background:#d2d2d2"></div>
<div class="a" style="left:96.80px;top:505.33px;width:835.80px;height:1.00px;background:#e3e3e3"></div>
<div class="a" style="left:80.00px;top:505.33px;width:16.80px;height:1.00px;background:#d2d2d2"></div>
<div class="a" style="left:96.80px;top:519.12px;width:835.80px;height:1.00px;background:#e3e3e3"></div>
<div class="a" style="left:80.00px;top:519.12px;width:16.80px;height:1.00px;background:#d2d2d2"></div>
<div class="a" style="left:80.00px;top:132.60px;width:852.60px;height:1.00px;background:#c8c8c8"></div>
<div class="a" style="left:96.20px;top:120.00px;width:1.00px;height:408.40px;background:#c8c8c8"></div>
<div class="a" style="left:80.00px;top:0.00px;width:1.00px;height:553.00px;background:#d0d0d0"></div>
<div class="a" style="left:494.80px;top:132.20px;width:39.80px;height:1.40px;background:#217346"></div>
<div class="a" style="left:94.80px;top:160.78px;width:1.80px;height:13.79px;background:#5f9f7a"></div>
<div class="t" id="m60" style="left:116.70px;top:120.86px;font-size:9.9px;line-height:11.88px;color:#444;;transform-origin:50% 50%;transform:translateX(-50%) scaleX(0.8490);">A</div>
<div class="t" id="m61" style="left:156.50px;top:120.86px;font-size:9.9px;line-height:11.88px;color:#444;;transform-origin:50% 50%;transform:translateX(-50%) scaleX(0.8490);">B</div>
<div class="t" id="m62" style="left:196.30px;top:120.86px;font-size:9.9px;line-height:11.88px;color:#444;;transform-origin:50% 50%;transform:translateX(-50%) scaleX(0.9192);">C</div>
<div class="t" id="m63" style="left:236.10px;top:120.86px;font-size:9.9px;line-height:11.88px;color:#444;;transform-origin:50% 50%;transform:translateX(-50%) scaleX(0.9192);">D</div>
<div class="t" id="m64" style="left:275.90px;top:120.86px;font-size:9.9px;line-height:11.88px;color:#444;;transform-origin:50% 50%;transform:translateX(-50%) scaleX(0.8490);">E</div>
<div class="t" id="m65" style="left:315.70px;top:120.86px;font-size:9.9px;line-height:11.88px;color:#444;;transform-origin:50% 50%;transform:translateX(-50%) scaleX(0.9070);">F</div>
<div class="t" id="m66" style="left:355.50px;top:120.86px;font-size:9.9px;line-height:11.88px;color:#444;;transform-origin:50% 50%;transform:translateX(-50%) scaleX(0.8663);">G</div>
<div class="t" id="m67" style="left:395.30px;top:120.86px;font-size:9.9px;line-height:11.88px;color:#444;;transform-origin:50% 50%;transform:translateX(-50%) scaleX(0.9192);">H</div>
<div class="t" id="m68" style="left:435.10px;top:120.86px;font-size:9.9px;line-height:11.88px;color:#444;;transform-origin:50% 50%;transform:translateX(-50%) scaleX(0.8251);">I</div>
<div class="t" id="m69" style="left:474.90px;top:120.86px;font-size:9.9px;line-height:11.88px;color:#444;;transform-origin:50% 50%;transform:translateX(-50%) scaleX(0.8910);">J</div>
<div class="t" id="m70" style="left:514.70px;top:120.86px;font-size:9.9px;line-height:11.88px;color:#217346;;transform-origin:50% 50%;transform:translateX(-50%) scaleX(0.8490);">K</div>
<div class="t" id="m71" style="left:554.50px;top:120.86px;font-size:9.9px;line-height:11.88px;color:#444;;transform-origin:50% 50%;transform:translateX(-50%) scaleX(0.8258);">L</div>
<div class="t" id="m72" style="left:594.30px;top:120.86px;font-size:9.9px;line-height:11.88px;color:#444;;transform-origin:50% 50%;transform:translateX(-50%) scaleX(0.9277);">M</div>
<div class="t" id="m73" style="left:634.10px;top:120.86px;font-size:9.9px;line-height:11.88px;color:#444;;transform-origin:50% 50%;transform:translateX(-50%) scaleX(0.9192);">N</div>
<div class="t" id="m74" style="left:673.90px;top:120.86px;font-size:9.9px;line-height:11.88px;color:#444;;transform-origin:50% 50%;transform:translateX(-50%) scaleX(0.8663);">O</div>
<div class="t" id="m75" style="left:713.70px;top:120.86px;font-size:9.9px;line-height:11.88px;color:#444;;transform-origin:50% 50%;transform:translateX(-50%) scaleX(0.8490);">P</div>
<div class="t" id="m76" style="left:753.50px;top:120.86px;font-size:9.9px;line-height:11.88px;color:#444;;transform-origin:50% 50%;transform:translateX(-50%) scaleX(0.8663);">Q</div>
<div class="t" id="m77" style="left:793.30px;top:120.86px;font-size:9.9px;line-height:11.88px;color:#444;;transform-origin:50% 50%;transform:translateX(-50%) scaleX(0.9192);">R</div>
<div class="t" id="m78" style="left:833.10px;top:120.86px;font-size:9.9px;line-height:11.88px;color:#444;;transform-origin:50% 50%;transform:translateX(-50%) scaleX(0.8490);">S</div>
<div class="t" id="m79" style="left:872.90px;top:120.86px;font-size:9.9px;line-height:11.88px;color:#444;;transform-origin:50% 50%;transform:translateX(-50%) scaleX(0.9070);">T</div>
<div class="t" id="m80" style="left:912.70px;top:120.86px;font-size:9.9px;line-height:11.88px;color:#444;;transform-origin:50% 50%;transform:translateX(-50%) scaleX(0.9192);">U</div>
<div class="t" id="m81" style="left:88.50px;top:134.25px;font-size:9.9px;line-height:11.88px;color:#444;;transform-origin:50% 50%;transform:translateX(-50%) scaleX(0.8258);">1</div>
<div class="t" id="m82" style="left:88.50px;top:148.04px;font-size:9.9px;line-height:11.88px;color:#444;;transform-origin:50% 50%;transform:translateX(-50%) scaleX(0.8258);">2</div>
<div class="t" id="m83" style="left:88.50px;top:161.83px;font-size:9.9px;line-height:11.88px;color:#217346;;transform-origin:50% 50%;transform:translateX(-50%) scaleX(0.8258);">3</div>
<div class="t" id="m84" style="left:88.50px;top:175.62px;font-size:9.9px;line-height:11.88px;color:#444;;transform-origin:50% 50%;transform:translateX(-50%) scaleX(0.8258);">4</div>
<div class="t" id="m85" style="left:88.50px;top:189.41px;font-size:9.9px;line-height:11.88px;color:#444;;transform-origin:50% 50%;transform:translateX(-50%) scaleX(0.8258);">5</div>
<div class="t" id="m86" style="left:88.50px;top:203.20px;font-size:9.9px;line-height:11.88px;color:#444;;transform-origin:50% 50%;transform:translateX(-50%) scaleX(0.8258);">6</div>
<div class="t" id="m87" style="left:88.50px;top:217.00px;font-size:9.9px;line-height:11.88px;color:#444;;transform-origin:50% 50%;transform:translateX(-50%) scaleX(0.8258);">7</div>
<div class="t" id="m88" style="left:88.50px;top:230.78px;font-size:9.9px;line-height:11.88px;color:#444;;transform-origin:50% 50%;transform:translateX(-50%) scaleX(0.8258);">8</div>
<div class="t" id="m89" style="left:88.50px;top:244.57px;font-size:9.9px;line-height:11.88px;color:#444;;transform-origin:50% 50%;transform:translateX(-50%) scaleX(0.8258);">9</div>
<div class="t" id="m90" style="left:88.50px;top:258.36px;font-size:9.9px;line-height:11.88px;color:#444;;transform-origin:50% 50%;transform:translateX(-50%) scaleX(0.9009);">10</div>
<div class="t" id="m91" style="left:88.50px;top:272.15px;font-size:9.9px;line-height:11.88px;color:#444;;transform-origin:50% 50%;transform:translateX(-50%) scaleX(0.9248);">11</div>
<div class="t" id="m92" style="left:88.50px;top:285.94px;font-size:9.9px;line-height:11.88px;color:#444;;transform-origin:50% 50%;transform:translateX(-50%) scaleX(0.9009);">12</div>
<div class="t" id="m93" style="left:88.50px;top:299.73px;font-size:9.9px;line-height:11.88px;color:#444;;transform-origin:50% 50%;transform:translateX(-50%) scaleX(0.9009);">13</div>
<div class="t" id="m94" style="left:88.50px;top:313.52px;font-size:9.9px;line-height:11.88px;color:#444;;transform-origin:50% 50%;transform:translateX(-50%) scaleX(0.9009);">14</div>
<div class="t" id="m95" style="left:88.50px;top:327.31px;font-size:9.9px;line-height:11.88px;color:#444;;transform-origin:50% 50%;transform:translateX(-50%) scaleX(0.9009);">15</div>
<div class="t" id="m96" style="left:88.50px;top:341.10px;font-size:9.9px;line-height:11.88px;color:#444;;transform-origin:50% 50%;transform:translateX(-50%) scaleX(0.9009);">16</div>
<div class="t" id="m97" style="left:88.50px;top:354.89px;font-size:9.9px;line-height:11.88px;color:#444;;transform-origin:50% 50%;transform:translateX(-50%) scaleX(0.9009);">17</div>
<div class="t" id="m98" style="left:88.50px;top:368.69px;font-size:9.9px;line-height:11.88px;color:#444;;transform-origin:50% 50%;transform:translateX(-50%) scaleX(0.9009);">18</div>
<div class="t" id="m99" style="left:88.50px;top:382.47px;font-size:9.9px;line-height:11.88px;color:#444;;transform-origin:50% 50%;transform:translateX(-50%) scaleX(0.9009);">19</div>
<div class="t" id="m100" style="left:88.50px;top:396.26px;font-size:9.9px;line-height:11.88px;color:#444;;transform-origin:50% 50%;transform:translateX(-50%) scaleX(0.9009);">20</div>
<div class="t" id="m101" style="left:88.50px;top:410.05px;font-size:9.9px;line-height:11.88px;color:#444;;transform-origin:50% 50%;transform:translateX(-50%) scaleX(0.9009);">21</div>
<div class="t" id="m102" style="left:88.50px;top:423.84px;font-size:9.9px;line-height:11.88px;color:#444;;transform-origin:50% 50%;transform:translateX(-50%) scaleX(0.9009);">22</div>
<div class="t" id="m103" style="left:88.50px;top:437.63px;font-size:9.9px;line-height:11.88px;color:#444;;transform-origin:50% 50%;transform:translateX(-50%) scaleX(0.9009);">23</div>
<div class="t" id="m104" style="left:88.50px;top:451.42px;font-size:9.9px;line-height:11.88px;color:#444;;transform-origin:50% 50%;transform:translateX(-50%) scaleX(0.9009);">24</div>
<div class="t" id="m105" style="left:88.50px;top:465.21px;font-size:9.9px;line-height:11.88px;color:#444;;transform-origin:50% 50%;transform:translateX(-50%) scaleX(0.9009);">25</div>
<div class="t" id="m106" style="left:88.50px;top:479.00px;font-size:9.9px;line-height:11.88px;color:#444;;transform-origin:50% 50%;transform:translateX(-50%) scaleX(0.9009);">26</div>
<div class="t" id="m107" style="left:88.50px;top:492.79px;font-size:9.9px;line-height:11.88px;color:#444;;transform-origin:50% 50%;transform:translateX(-50%) scaleX(0.9009);">27</div>
<div class="t" id="m108" style="left:88.50px;top:506.58px;font-size:9.9px;line-height:11.88px;color:#444;;transform-origin:50% 50%;transform:translateX(-50%) scaleX(0.9009);">28</div>
<div class="t" id="m109" style="left:88.50px;top:520.37px;font-size:9.9px;line-height:11.88px;color:#444;;transform-origin:50% 50%;transform:translateX(-50%) scaleX(0.9009);">29</div>
<svg style="left:84.50px;top:122.50px;" width="11" height="10" viewBox="0 0 11 10"><polygon points="10.5,0 10.5,9.5 0,9.5" fill="#b8b8b8"/></svg>
<div class="a" style="left:96.80px;top:133.20px;width:39.80px;height:13.79px;background:#d9e1f2"></div>
<div class="a" style="left:136.60px;top:133.20px;width:39.80px;height:13.79px;background:#d9e1f2"></div>
<div class="a" style="left:176.40px;top:133.20px;width:39.80px;height:13.79px;background:#d9e1f2"></div>
<div class="a" style="left:216.20px;top:133.20px;width:39.80px;height:13.79px;background:#d9e1f2"></div>
<div class="a" style="left:256.00px;top:133.20px;width:39.80px;height:13.79px;background:#d9e1f2"></div>
<div class="a" style="left:295.80px;top:133.20px;width:39.80px;height:13.79px;background:#d9e1f2"></div>
<div class="a" style="left:335.60px;top:133.20px;width:39.80px;height:13.79px;background:#d9e1f2"></div>
<div class="t" id="m110" style="left:98.00px;top:135.01px;font-size:8.8px;line-height:10.56px;color:#333;;transform-origin:0 50%;transform:scaleX(0.8750);">NO.</div>
<div class="a" style="left:126.60px;top:137.30px;width:8.60px;height:9.40px;background:#f7f9fc;border:0.5px solid #dde3ec"></div>
<svg style="left:129.20px;top:141.50px;" width="3.4" height="2" viewBox="0 0 3.4 2"><path d="M0 0 H3.4 L1.7 1.8 Z" fill="#555"/></svg>
<div class="t" id="m111" style="left:137.80px;top:135.01px;font-size:8.8px;line-height:10.56px;color:#333;;transform-origin:0 50%;transform:scaleX(0.8889);">名前</div>
<div class="a" style="left:166.40px;top:137.30px;width:8.60px;height:9.40px;background:#f7f9fc;border:0.5px solid #dde3ec"></div>
<svg style="left:169.00px;top:141.50px;" width="3.4" height="2" viewBox="0 0 3.4 2"><path d="M0 0 H3.4 L1.7 1.8 Z" fill="#555"/></svg>
<div class="t" id="m112" style="left:177.60px;top:135.01px;font-size:8.8px;line-height:10.56px;color:#333;;transform-origin:0 50%;transform:scaleX(0.8889);">性別</div>
<div class="a" style="left:206.20px;top:137.30px;width:8.60px;height:9.40px;background:#f7f9fc;border:0.5px solid #dde3ec"></div>
<svg style="left:208.80px;top:141.50px;" width="3.4" height="2" viewBox="0 0 3.4 2"><path d="M0 0 H3.4 L1.7 1.8 Z" fill="#555"/></svg>
<div class="t" id="m113" style="left:217.40px;top:135.01px;font-size:8.8px;line-height:10.56px;color:#333;;transform-origin:0 50%;transform:scaleX(0.8889);">国語</div>
<div class="a" style="left:246.00px;top:137.30px;width:8.60px;height:9.40px;background:#f7f9fc;border:0.5px solid #dde3ec"></div>
<svg style="left:248.60px;top:141.50px;" width="3.4" height="2" viewBox="0 0 3.4 2"><path d="M0 0 H3.4 L1.7 1.8 Z" fill="#555"/></svg>
<div class="t" id="m114" style="left:257.20px;top:135.01px;font-size:8.8px;line-height:10.56px;color:#333;;transform-origin:0 50%;transform:scaleX(0.8889);">英語</div>
<div class="a" style="left:285.80px;top:137.30px;width:8.60px;height:9.40px;background:#f7f9fc;border:0.5px solid #dde3ec"></div>
<svg style="left:288.40px;top:141.50px;" width="3.4" height="2" viewBox="0 0 3.4 2"><path d="M0 0 H3.4 L1.7 1.8 Z" fill="#555"/></svg>
<div class="t" id="m115" style="left:297.00px;top:135.01px;font-size:8.8px;line-height:10.56px;color:#333;;transform-origin:0 50%;transform:scaleX(0.8889);">数学</div>
<div class="a" style="left:325.60px;top:137.30px;width:8.60px;height:9.40px;background:#f7f9fc;border:0.5px solid #dde3ec"></div>
<svg style="left:328.20px;top:141.50px;" width="3.4" height="2" viewBox="0 0 3.4 2"><path d="M0 0 H3.4 L1.7 1.8 Z" fill="#555"/></svg>
<div class="t" id="m116" style="left:336.80px;top:135.01px;font-size:8.8px;line-height:10.56px;color:#333;;transform-origin:0 50%;transform:scaleX(0.8889);">合計</div>
<div class="a" style="left:365.40px;top:137.30px;width:8.60px;height:9.40px;background:#f7f9fc;border:0.5px solid #dde3ec"></div>
<svg style="left:368.00px;top:141.50px;" width="3.4" height="2" viewBox="0 0 3.4 2"><path d="M0 0 H3.4 L1.7 1.8 Z" fill="#555"/></svg>
<div class="t" id="m117" style="left:134.30px;top:149.03px;font-size:8.6px;line-height:10.32px;color:#333;;transform-origin:100% 50%;transform:translateX(-100%) scaleX(0.8600);">1</div>
<div class="t" id="m118" style="left:138.20px;top:148.91px;font-size:8.8px;line-height:10.56px;color:#333;;transform-origin:0 50%;transform:scaleX(0.8722);">佐藤</div>
<div class="t" id="m119" style="left:178.00px;top:148.91px;font-size:8.8px;line-height:10.56px;color:#333;;transform-origin:0 50%;transform:scaleX(0.8722);">女性</div>
<div class="t" id="m120" style="left:253.70px;top:149.03px;font-size:8.6px;line-height:10.32px;color:#333;;transform-origin:100% 50%;transform:translateX(-100%) scaleX(0.9214);">100</div>
<div class="t" id="m121" style="left:293.50px;top:149.03px;font-size:8.6px;line-height:10.32px;color:#333;;transform-origin:100% 50%;transform:translateX(-100%) scaleX(0.9214);">100</div>
<div class="t" id="m122" style="left:333.30px;top:149.03px;font-size:8.6px;line-height:10.32px;color:#333;;transform-origin:100% 50%;transform:translateX(-100%) scaleX(0.8600);">90</div>
<div class="t" id="m123" style="left:373.10px;top:149.03px;font-size:8.6px;line-height:10.32px;color:#333;;transform-origin:100% 50%;transform:translateX(-100%) scaleX(0.9214);">290</div>
<div class="t" id="m124" style="left:134.30px;top:162.81px;font-size:8.6px;line-height:10.32px;color:#333;;transform-origin:100% 50%;transform:translateX(-100%) scaleX(0.8600);">2</div>
<div class="t" id="m125" style="left:138.20px;top:162.69px;font-size:8.8px;line-height:10.56px;color:#333;;transform-origin:0 50%;transform:scaleX(0.8722);">鈴木</div>
<div class="t" id="m126" style="left:178.00px;top:162.69px;font-size:8.8px;line-height:10.56px;color:#333;;transform-origin:0 50%;transform:scaleX(0.8722);">男性</div>
<div class="t" id="m127" style="left:253.70px;top:162.81px;font-size:8.6px;line-height:10.32px;color:#333;;transform-origin:100% 50%;transform:translateX(-100%) scaleX(0.9214);">100</div>
<div class="t" id="m128" style="left:293.50px;top:162.81px;font-size:8.6px;line-height:10.32px;color:#333;;transform-origin:100% 50%;transform:translateX(-100%) scaleX(0.9214);">100</div>
<div class="t" id="m129" style="left:333.30px;top:162.81px;font-size:8.6px;line-height:10.32px;color:#333;;transform-origin:100% 50%;transform:translateX(-100%) scaleX(0.8600);">60</div>
<div class="t" id="m130" style="left:373.10px;top:162.81px;font-size:8.6px;line-height:10.32px;color:#333;;transform-origin:100% 50%;transform:translateX(-100%) scaleX(0.9214);">260</div>
<div class="t" id="m131" style="left:134.30px;top:176.61px;font-size:8.6px;line-height:10.32px;color:#333;;transform-origin:100% 50%;transform:translateX(-100%) scaleX(0.8600);">3</div>
<div class="t" id="m132" style="left:138.20px;top:176.49px;font-size:8.8px;line-height:10.56px;color:#333;;transform-origin:0 50%;transform:scaleX(0.8722);">高橋</div>
<div class="t" id="m133" style="left:178.00px;top:176.49px;font-size:8.8px;line-height:10.56px;color:#333;;transform-origin:0 50%;transform:scaleX(0.8722);">女性</div>
<div class="t" id="m134" style="left:253.70px;top:176.61px;font-size:8.6px;line-height:10.32px;color:#333;;transform-origin:100% 50%;transform:translateX(-100%) scaleX(0.9214);">100</div>
<div class="t" id="m135" style="left:293.50px;top:176.61px;font-size:8.6px;line-height:10.32px;color:#333;;transform-origin:100% 50%;transform:translateX(-100%) scaleX(0.9214);">100</div>
<div class="t" id="m136" style="left:333.30px;top:176.61px;font-size:8.6px;line-height:10.32px;color:#333;;transform-origin:100% 50%;transform:translateX(-100%) scaleX(0.8600);">90</div>
<div class="t" id="m137" style="left:373.10px;top:176.61px;font-size:8.6px;line-height:10.32px;color:#333;;transform-origin:100% 50%;transform:translateX(-100%) scaleX(0.9214);">290</div>
<div class="t" id="m138" style="left:134.30px;top:190.40px;font-size:8.6px;line-height:10.32px;color:#333;;transform-origin:100% 50%;transform:translateX(-100%) scaleX(0.8600);">4</div>
<div class="t" id="m139" style="left:138.20px;top:190.28px;font-size:8.8px;line-height:10.56px;color:#333;;transform-origin:0 50%;transform:scaleX(0.8722);">田中</div>
<div class="t" id="m140" style="left:178.00px;top:190.28px;font-size:8.8px;line-height:10.56px;color:#333;;transform-origin:0 50%;transform:scaleX(0.8722);">男性</div>
<div class="t" id="m141" style="left:253.70px;top:190.40px;font-size:8.6px;line-height:10.32px;color:#333;;transform-origin:100% 50%;transform:translateX(-100%) scaleX(0.9214);">100</div>
<div class="t" id="m142" style="left:293.50px;top:190.40px;font-size:8.6px;line-height:10.32px;color:#333;;transform-origin:100% 50%;transform:translateX(-100%) scaleX(0.9214);">100</div>
<div class="t" id="m143" style="left:333.30px;top:190.40px;font-size:8.6px;line-height:10.32px;color:#333;;transform-origin:100% 50%;transform:translateX(-100%) scaleX(0.8600);">90</div>
<div class="t" id="m144" style="left:373.10px;top:190.40px;font-size:8.6px;line-height:10.32px;color:#333;;transform-origin:100% 50%;transform:translateX(-100%) scaleX(0.9214);">290</div>
<div class="t" id="m145" style="left:134.30px;top:204.19px;font-size:8.6px;line-height:10.32px;color:#333;;transform-origin:100% 50%;transform:translateX(-100%) scaleX(0.8600);">5</div>
<div class="t" id="m146" style="left:138.20px;top:204.06px;font-size:8.8px;line-height:10.56px;color:#333;;transform-origin:0 50%;transform:scaleX(0.8722);">伊藤</div>
<div class="t" id="m147" style="left:178.00px;top:204.06px;font-size:8.8px;line-height:10.56px;color:#333;;transform-origin:0 50%;transform:scaleX(0.8722);">男性</div>
<div class="t" id="m148" style="left:217.80px;top:204.06px;font-size:8.8px;line-height:10.56px;color:#333;;transform-origin:0 50%;transform:scaleX(0.8667);">欠</div>
<div class="t" id="m149" style="left:333.30px;top:204.19px;font-size:8.6px;line-height:10.32px;color:#333;;transform-origin:100% 50%;transform:translateX(-100%) scaleX(0.8600);">90</div>
<div class="t" id="m150" style="left:373.10px;top:204.19px;font-size:8.6px;line-height:10.32px;color:#333;;transform-origin:100% 50%;transform:translateX(-100%) scaleX(0.8600);">90</div>
<div class="t" id="m151" style="left:134.30px;top:217.98px;font-size:8.6px;line-height:10.32px;color:#333;;transform-origin:100% 50%;transform:translateX(-100%) scaleX(0.8600);">6</div>
<div class="t" id="m152" style="left:138.20px;top:217.86px;font-size:8.8px;line-height:10.56px;color:#333;;transform-origin:0 50%;transform:scaleX(0.8722);">渡辺</div>
<div class="t" id="m153" style="left:178.00px;top:217.86px;font-size:8.8px;line-height:10.56px;color:#333;;transform-origin:0 50%;transform:scaleX(0.8722);">女性</div>
<div class="t" id="m154" style="left:253.70px;top:217.98px;font-size:8.6px;line-height:10.32px;color:#333;;transform-origin:100% 50%;transform:translateX(-100%) scaleX(0.9214);">100</div>
<div class="t" id="m155" style="left:293.50px;top:217.98px;font-size:8.6px;line-height:10.32px;color:#333;;transform-origin:100% 50%;transform:translateX(-100%) scaleX(0.9214);">100</div>
<div class="t" id="m156" style="left:333.30px;top:217.98px;font-size:8.6px;line-height:10.32px;color:#333;;transform-origin:100% 50%;transform:translateX(-100%) scaleX(0.8600);">80</div>
<div class="t" id="m157" style="left:373.10px;top:217.98px;font-size:8.6px;line-height:10.32px;color:#333;;transform-origin:100% 50%;transform:translateX(-100%) scaleX(0.9214);">280</div>
<div class="t" id="m158" style="left:134.30px;top:231.77px;font-size:8.6px;line-height:10.32px;color:#333;;transform-origin:100% 50%;transform:translateX(-100%) scaleX(0.8600);">7</div>
<div class="t" id="m159" style="left:138.20px;top:231.65px;font-size:8.8px;line-height:10.56px;color:#333;;transform-origin:0 50%;transform:scaleX(0.8722);">山本</div>
<div class="t" id="m160" style="left:178.00px;top:231.65px;font-size:8.8px;line-height:10.56px;color:#333;;transform-origin:0 50%;transform:scaleX(0.8722);">女性</div>
<div class="t" id="m161" style="left:253.70px;top:231.77px;font-size:8.6px;line-height:10.32px;color:#333;;transform-origin:100% 50%;transform:translateX(-100%) scaleX(0.9214);">100</div>
<div class="t" id="m162" style="left:293.50px;top:231.77px;font-size:8.6px;line-height:10.32px;color:#333;;transform-origin:100% 50%;transform:translateX(-100%) scaleX(0.9214);">100</div>
<div class="t" id="m163" style="left:333.30px;top:231.77px;font-size:8.6px;line-height:10.32px;color:#333;;transform-origin:100% 50%;transform:translateX(-100%) scaleX(0.8600);">85</div>
<div class="t" id="m164" style="left:373.10px;top:231.77px;font-size:8.6px;line-height:10.32px;color:#333;;transform-origin:100% 50%;transform:translateX(-100%) scaleX(0.9214);">285</div>
<div class="t" id="m165" style="left:134.30px;top:245.56px;font-size:8.6px;line-height:10.32px;color:#333;;transform-origin:100% 50%;transform:translateX(-100%) scaleX(0.8600);">8</div>
<div class="t" id="m166" style="left:138.20px;top:245.44px;font-size:8.8px;line-height:10.56px;color:#333;;transform-origin:0 50%;transform:scaleX(0.8722);">中村</div>
<div class="t" id="m167" style="left:178.00px;top:245.44px;font-size:8.8px;line-height:10.56px;color:#333;;transform-origin:0 50%;transform:scaleX(0.8722);">男性</div>
<div class="t" id="m168" style="left:253.70px;top:245.56px;font-size:8.6px;line-height:10.32px;color:#333;;transform-origin:100% 50%;transform:translateX(-100%) scaleX(0.9214);">100</div>
<div class="t" id="m169" style="left:293.50px;top:245.56px;font-size:8.6px;line-height:10.32px;color:#333;;transform-origin:100% 50%;transform:translateX(-100%) scaleX(0.9214);">100</div>
<div class="t" id="m170" style="left:333.30px;top:245.56px;font-size:8.6px;line-height:10.32px;color:#333;;transform-origin:100% 50%;transform:translateX(-100%) scaleX(0.8600);">50</div>
<div class="t" id="m171" style="left:373.10px;top:245.56px;font-size:8.6px;line-height:10.32px;color:#333;;transform-origin:100% 50%;transform:translateX(-100%) scaleX(0.9214);">250</div>
<div class="t" id="m172" style="left:134.30px;top:259.34px;font-size:8.6px;line-height:10.32px;color:#333;;transform-origin:100% 50%;transform:translateX(-100%) scaleX(0.8600);">9</div>
<div class="t" id="m173" style="left:138.20px;top:259.22px;font-size:8.8px;line-height:10.56px;color:#333;;transform-origin:0 50%;transform:scaleX(0.8722);">小林</div>
<div class="t" id="m174" style="left:178.00px;top:259.22px;font-size:8.8px;line-height:10.56px;color:#333;;transform-origin:0 50%;transform:scaleX(0.8722);">男性</div>
<div class="t" id="m175" style="left:253.70px;top:259.34px;font-size:8.6px;line-height:10.32px;color:#333;;transform-origin:100% 50%;transform:translateX(-100%) scaleX(0.9214);">100</div>
<div class="t" id="m176" style="left:293.50px;top:259.34px;font-size:8.6px;line-height:10.32px;color:#333;;transform-origin:100% 50%;transform:translateX(-100%) scaleX(0.9214);">100</div>
<div class="t" id="m177" style="left:333.30px;top:259.34px;font-size:8.6px;line-height:10.32px;color:#333;;transform-origin:100% 50%;transform:translateX(-100%) scaleX(0.8600);">70</div>
<div class="t" id="m178" style="left:373.10px;top:259.34px;font-size:8.6px;line-height:10.32px;color:#333;;transform-origin:100% 50%;transform:translateX(-100%) scaleX(0.9214);">270</div>
<div class="t" id="m179" style="left:134.30px;top:273.13px;font-size:8.6px;line-height:10.32px;color:#333;;transform-origin:100% 50%;transform:translateX(-100%) scaleX(0.8600);">10</div>
<div class="t" id="m180" style="left:138.20px;top:273.01px;font-size:8.8px;line-height:10.56px;color:#333;;transform-origin:0 50%;transform:scaleX(0.8722);">加藤</div>
<div class="t" id="m181" style="left:178.00px;top:273.01px;font-size:8.8px;line-height:10.56px;color:#333;;transform-origin:0 50%;transform:scaleX(0.8722);">女性</div>
<div class="t" id="m182" style="left:253.70px;top:273.13px;font-size:8.6px;line-height:10.32px;color:#333;;transform-origin:100% 50%;transform:translateX(-100%) scaleX(0.9214);">100</div>
<div class="t" id="m183" style="left:293.50px;top:273.13px;font-size:8.6px;line-height:10.32px;color:#333;;transform-origin:100% 50%;transform:translateX(-100%) scaleX(0.9214);">100</div>
<div class="t" id="m184" style="left:333.30px;top:273.13px;font-size:8.6px;line-height:10.32px;color:#333;;transform-origin:100% 50%;transform:translateX(-100%) scaleX(0.8600);">75</div>
<div class="t" id="m185" style="left:373.10px;top:273.13px;font-size:8.6px;line-height:10.32px;color:#333;;transform-origin:100% 50%;transform:translateX(-100%) scaleX(0.9214);">275</div>
<div class="a" style="left:96.30px;top:133.00px;width:1.00px;height:152.69px;background:#5e5e5e"></div>
<div class="a" style="left:136.10px;top:133.00px;width:1.00px;height:152.69px;background:#5e5e5e"></div>
<div class="a" style="left:175.90px;top:133.00px;width:1.00px;height:152.69px;background:#5e5e5e"></div>
<div class="a" style="left:215.70px;top:133.00px;width:1.00px;height:152.69px;background:#5e5e5e"></div>
<div class="a" style="left:255.50px;top:133.00px;width:1.00px;height:152.69px;background:#5e5e5e"></div>
<div class="a" style="left:295.30px;top:133.00px;width:1.00px;height:152.69px;background:#5e5e5e"></div>
<div class="a" style="left:335.10px;top:133.00px;width:1.00px;height:152.69px;background:#5e5e5e"></div>
<div class="a" style="left:374.90px;top:133.00px;width:1.00px;height:152.69px;background:#5e5e5e"></div>
<div class="a" style="left:96.80px;top:133.00px;width:278.60px;height:1.00px;background:#9a9a9a"></div>
<div class="a" style="left:96.80px;top:146.79px;width:278.60px;height:1.00px;background:#858585"></div>
<div class="a" style="left:96.80px;top:160.58px;width:278.60px;height:1.00px;background:#858585"></div>
<div class="a" style="left:96.80px;top:174.37px;width:278.60px;height:1.00px;background:#858585"></div>
<div class="a" style="left:96.80px;top:188.16px;width:278.60px;height:1.00px;background:#858585"></div>
<div class="a" style="left:96.80px;top:201.95px;width:278.60px;height:1.00px;background:#858585"></div>
<div class="a" style="left:96.80px;top:215.74px;width:278.60px;height:1.00px;background:#858585"></div>
<div class="a" style="left:96.80px;top:229.53px;width:278.60px;height:1.00px;background:#858585"></div>
<div class="a" style="left:96.80px;top:243.32px;width:278.60px;height:1.00px;background:#858585"></div>
<div class="a" style="left:96.80px;top:257.11px;width:278.60px;height:1.00px;background:#858585"></div>
<div class="a" style="left:96.80px;top:270.90px;width:278.60px;height:1.00px;background:#858585"></div>
<div class="a" style="left:96.80px;top:284.69px;width:278.60px;height:1.00px;background:#858585"></div>
<svg style="left:372.40px;top:281.89px;" width="3" height="3" viewBox="0 0 3 3"><polygon points="3,0 3,3 0,3" fill="#2f4f8f"/></svg>
<div class="a" style="left:455.50px;top:133.70px;width:78.60px;height:12.79px;background:#fff"></div>
<div class="a" style="left:455.50px;top:147.49px;width:78.60px;height:12.79px;background:#fff"></div>
<div class="a" style="left:455.50px;top:202.65px;width:78.60px;height:12.79px;background:#fff"></div>
<div class="a" style="left:455.00px;top:160.78px;width:39.80px;height:13.79px;background:#d9e1f2"></div>
<div class="a" style="left:455.00px;top:174.57px;width:39.80px;height:13.79px;background:#fce4d6"></div>
<div class="a" style="left:455.00px;top:215.94px;width:39.80px;height:13.79px;background:#ededed"></div>
<div class="t" id="m186" style="left:494.80px;top:135.00px;font-size:9px;line-height:10.80px;color:#333;;transform-origin:50% 50%;transform:translateX(-50%) scaleX(0.9130);">AVERAGEIF関数</div>
<div class="t" id="m187" style="left:473.20px;top:148.91px;font-size:8.8px;line-height:10.56px;color:#333;;transform-origin:0 50%;transform:scaleX(0.8778);">数学</div>
<div class="t" id="m188" style="left:500.00px;top:148.91px;font-size:8.8px;line-height:10.56px;color:#333;;transform-origin:0 50%;transform:scaleX(0.8722);">平均</div>
<div class="t" id="m189" style="left:456.60px;top:162.69px;font-size:8.8px;line-height:10.56px;color:#333;;transform-origin:0 50%;transform:scaleX(0.8722);">男性</div>
<div class="t" id="m190" style="left:456.60px;top:176.49px;font-size:8.8px;line-height:10.56px;color:#333;;transform-origin:0 50%;transform:scaleX(0.8722);">女性</div>
<div class="t" id="m191" style="left:494.80px;top:204.06px;font-size:8.8px;line-height:10.56px;color:#333;;transform-origin:50% 50%;transform:translateX(-50%) scaleX(0.9111);">数学平均</div>
<div class="t" id="m192" style="left:456.20px;top:217.86px;font-size:8.8px;line-height:10.56px;color:#333;;transform-origin:0 50%;transform:scaleX(0.9108);">70点以上</div>
<div class="a" style="left:454.50px;top:132.70px;width:80.60px;height:14.79px;border:1px solid #808080"></div>
<div class="a" style="left:454.50px;top:146.49px;width:80.60px;height:14.79px;border:1px solid #808080"></div>
<div class="a" style="left:454.50px;top:160.28px;width:40.80px;height:14.79px;border:1px solid #808080"></div>
<div class="a" style="left:454.50px;top:174.07px;width:40.80px;height:14.79px;border:1px solid #808080"></div>
<div class="a" style="left:454.50px;top:201.65px;width:80.60px;height:14.79px;border:1px solid #808080"></div>
<div class="a" style="left:454.50px;top:215.44px;width:40.80px;height:14.79px;border:1px solid #808080"></div>
<div class="a" style="left:494.30px;top:215.44px;width:40.80px;height:14.79px;border:1px solid #808080"></div>
<div class="a" style="left:495.30px;top:161.28px;width:78.60px;height:12.79px;background:#fff"></div>
<div class="a" style="left:494.20px;top:160.18px;width:41.00px;height:1.30px;background:#5f9f7a"></div>
<div class="a" style="left:494.20px;top:160.18px;width:1.30px;height:14.99px;background:#5f9f7a"></div>
<div class="t" id="m193" style="left:497.60px;top:162.12px;font-size:10.6px;line-height:12.72px;color:#333;;transform-origin:0 50%;transform:scaleX(0.7643);">=AVERAGEIF(</div>
<div class="a" style="left:551.30px;top:161.50px;width:0.90px;height:13.00px;background:#333"></div>
<div class="a" style="left:498.50px;top:175.20px;width:140.50px;height:12.50px;background:#fff;border:0.8px solid #d0d0d0;box-shadow:0 0 1px rgba(0,0,0,0.1)"></div>
<div class="t" id="m194" style="left:504.50px;top:176.70px;font-size:8px;line-height:9.60px;color:#555;;transform-origin:0 50%;transform:scaleX(0.9097);">AVERAGEIF(<b>範囲</b>, 条件, [平均対象範囲])</div>
<div class="a" style="left:495.00px;top:169.50px;width:151.00px;height:22.50px;border:3.2px solid #ee1111"></div>
<svg style="left:607.00px;top:126.30px;" width="16" height="16" viewBox="0 0 16 16"><circle cx="8" cy="8" r="7.6" fill="#f07a72" fill-opacity="0.92"/><path d="M8 4.2 V11.8 M4.2 8 H11.8" stroke="#222" stroke-width="3.8" stroke-opacity="0.75"/><path d="M8 4.8 V11.2 M4.8 8 H11.2" stroke="#fff" stroke-width="2.4"/></svg>
<div class="a" style="left:932.60px;top:120.00px;width:11.40px;height:408.40px;background:#e9e9e9"></div>
<div class="a" style="left:934.00px;top:120.30px;width:8.50px;height:9.40px;background:#fff"></div>
<svg style="left:936.00px;top:123.60px;" width="4.5" height="2.5" viewBox="0 0 4.5 2.5"><path d="M0 2.5 H4.5 L2.25 0 Z" fill="#555"/></svg>
<div class="a" style="left:933.60px;top:130.00px;width:9.40px;height:375.00px;background:#fff;border-left:0.5px solid #ddd"></div>
<div class="a" style="left:934.00px;top:519.60px;width:8.50px;height:9.00px;background:#fff"></div>
<svg style="left:936.00px;top:523.00px;" width="4.5" height="2.5" viewBox="0 0 4.5 2.5"><path d="M0 0 H4.5 L2.25 2.5 Z" fill="#555"/></svg>
<div class="a" style="left:80.00px;top:528.40px;width:864.00px;height:11.20px;background:#e6e6e6"></div>
<div class="a" style="left:80.00px;top:528.40px;width:852.60px;height:0.80px;background:#d4d4d4"></div>
<svg style="left:90.80px;top:531.80px;" width="2.5" height="4" viewBox="0 0 2.5 4"><path d="M2.5 0 V4 L0 2 Z" fill="#c4c4c4"/></svg>
<svg style="left:102.50px;top:531.80px;" width="2.5" height="4" viewBox="0 0 2.5 4"><path d="M0 0 V4 L2.5 2 Z" fill="#c4c4c4"/></svg>
<div class="a" style="left:121.50px;top:528.40px;width:37.80px;height:10.30px;background:#fff"></div>
<div class="a" style="left:121.50px;top:538.20px;width:37.80px;height:1.30px;background:#6aa384"></div>
<div class="t" id="m195" style="left:127.00px;top:528.56px;font-size:8.4px;line-height:10.08px;color:#217346;;transform-origin:0 50%;transform:scaleX(0.9556);">Sheet1</div>
<svg style="left:172.80px;top:530.20px;" width="8.5" height="8.5" viewBox="0 0 8.5 8.5"><circle cx="4.25" cy="4.25" r="3.8" fill="none" stroke="#888" stroke-width="0.8"/><path d="M4.25 2.3 V6.2 M2.3 4.25 H6.2" stroke="#777" stroke-width="0.8"/></svg>
<div class="a" style="left:596.50px;top:531.50px;width:0.80px;height:0.80px;background:#aaa"></div>
<div class="a" style="left:596.50px;top:533.50px;width:0.80px;height:0.80px;background:#aaa"></div>
<div class="a" style="left:596.50px;top:535.50px;width:0.80px;height:0.80px;background:#aaa"></div>
<div class="a" style="left:603.00px;top:529.30px;width:9.70px;height:9.70px;background:#fff"></div>
<svg style="left:606.50px;top:532.20px;" width="2.5" height="4" viewBox="0 0 2.5 4"><path d="M2.5 0 V4 L0 2 Z" fill="#555"/></svg>
<div class="a" style="left:612.70px;top:529.30px;width:294.30px;height:9.70px;background:#fff"></div>
<div class="a" style="left:612.40px;top:529.30px;width:0.80px;height:9.70px;background:#d6d6d6"></div>
<div class="a" style="left:907.00px;top:529.30px;width:16.60px;height:9.70px;background:#dcdcdc"></div>
<div class="a" style="left:923.60px;top:529.30px;width:8.40px;height:9.70px;background:#fff"></div>
<svg style="left:927.00px;top:532.20px;" width="2.5" height="4" viewBox="0 0 2.5 4"><path d="M0 0 V4 L2.5 2 Z" fill="#555"/></svg>
<div class="a" style="left:932.60px;top:528.40px;width:11.40px;height:11.20px;background:#e6e6e6"></div>
<div class="a" style="left:80.00px;top:539.60px;width:864.00px;height:13.30px;background:#f3f3f3"></div>
<div class="a" style="left:80.00px;top:539.30px;width:864.00px;height:1.00px;background:#d6d6d6"></div>
<div class="t" id="m196" style="left:84.80px;top:542.54px;font-size:7.6px;line-height:9.12px;color:#555;;transform-origin:0 50%;transform:scaleX(0.8250);">入力</div>
<svg style="left:721.00px;top:542.50px;" width="9" height="8" viewBox="0 0 9 8"><rect x="0.5" y="0.5" width="8" height="5.5" fill="none" stroke="#666" stroke-width="0.8"/><path d="M3 7.5 H6" stroke="#666" stroke-width="0.8"/><rect x="4.5" y="4" width="4" height="4" fill="#555"/></svg>
<div class="t" id="m197" style="left:730.50px;top:542.54px;font-size:7.6px;line-height:9.12px;color:#555;;transform-origin:0 50%;transform:scaleX(0.8906);">表示設定</div>
<svg style="left:776.00px;top:543.00px;" width="9" height="8" viewBox="0 0 9 8"><rect x="0.5" y="0.5" width="8" height="7" fill="none" stroke="#aaa" stroke-width="0.7"/><path d="M0.5 2.8 H8.5 M0.5 5.2 H8.5 M3.2 0.5 V7.5 M5.8 0.5 V7.5" stroke="#bbb" stroke-width="0.6"/></svg>
<svg style="left:799.00px;top:543.00px;" width="9" height="8" viewBox="0 0 9 8"><rect x="0.5" y="0.5" width="8" height="7" fill="none" stroke="#aaa" stroke-width="0.7"/><rect x="2.3" y="1.8" width="4.4" height="4.6" fill="none" stroke="#bbb" stroke-width="0.6"/></svg>
<svg style="left:822.00px;top:543.00px;" width="9" height="8" viewBox="0 0 9 8"><rect x="0.5" y="0.5" width="8" height="7" fill="none" stroke="#aaa" stroke-width="0.7"/><path d="M0.5 5 H5 V0.5" fill="none" stroke="#bbb" stroke-width="0.6"/></svg>
<div class="a" style="left:841.00px;top:547.00px;width:3.50px;height:0.70px;background:#bbb"></div>
<div class="a" style="left:848.00px;top:546.70px;width:57.70px;height:1.20px;background:#9a9a9a"></div>
<div class="a" style="left:876.00px;top:544.80px;width:1.60px;height:4.50px;background:#666"></div>
<svg style="left:908.50px;top:545.00px;" width="4" height="4" viewBox="0 0 4 4"><path d="M2 0 V4 M0 2 H4" stroke="#bbb" stroke-width="0.7"/></svg>
<div class="t" id="m198" style="left:919.00px;top:542.18px;font-size:8.2px;line-height:9.84px;color:#b0b0b0;;transform-origin:0 50%;transform:scaleX(1.0000);">100%</div>
<div class="a" style="left:80.00px;top:552.90px;width:864.00px;height:23.10px;background:linear-gradient(90deg,#1f3542 0%,#1f3442 35%,#1d2f41 60%,#1b2b44 80%,#1a2a48 100%)"></div>
<div class="a" style="left:80.00px;top:552.90px;width:864.00px;height:0.80px;background:#56626b"></div>
<div class="a" style="left:941.50px;top:552.90px;width:1.00px;height:23.10px;background:#3a4d6a"></div>
<svg style="left:89.00px;top:560.00px;" width="10" height="9.3" viewBox="0 0 10 9.3"><path d="M0 1.3 L4.4 0.7 V4.4 H0 Z M5 0.6 L10 0 V4.4 H5 Z M0 5 H4.4 V8.7 L0 8.1 Z M5 5 H10 V9.3 L5 8.7 Z" fill="#fff"/></svg>
<div class="a" style="left:107.40px;top:552.90px;width:197.60px;height:23.10px;background:#f0f0f0"></div>
<svg style="left:114.50px;top:560.00px;" width="9.5" height="9.5" viewBox="0 0 9.5 9.5"><circle cx="6" cy="3.6" r="3" fill="none" stroke="#333" stroke-width="1"/><path d="M3.9 5.7 L0.6 9" stroke="#333" stroke-width="1.1"/></svg>
<div class="t" id="m199" style="left:130.60px;top:560.08px;font-size:8.2px;line-height:9.84px;color:#333;;transform-origin:0 50%;transform:scaleX(0.9111);">ここに入力して検索</div>
<svg style="left:314.00px;top:560.00px;" width="10" height="10" viewBox="0 0 10 10"><circle cx="5" cy="5" r="4.2" fill="none" stroke="#fff" stroke-width="1.2"/></svg>
<svg style="left:341.40px;top:559.50px;" width="10" height="10" viewBox="0 0 10 10"><rect x="1.5" y="2" width="6" height="6" fill="none" stroke="#ddd" stroke-width="0.9"/><path d="M0.4 0.5 V9.5 M9.4 0.5 V9.5 M1.5 0.5 H7.5 M1.5 9.5 H7.5" stroke="#ddd" stroke-width="0.8"/></svg>
<svg style="left:368.75px;top:559.00px;" width="12.5" height="11" viewBox="0 0 12.5 11"><path d="M0 1 H4.5 L5.5 2 H12.5 V11 H0 Z" fill="#f0b429"/><rect x="0" y="3" width="12.5" height="8" fill="#ffd35c"/><rect x="3" y="6.5" width="6.5" height="4.5" fill="#2f7fc8"/><rect x="4.3" y="8" width="4" height="3" fill="#ffd35c"/></svg>
<svg style="left:394.50px;top:558.00px;" width="13" height="13" viewBox="0 0 13 13"><rect width="13" height="13" fill="#2a6fc4"/><path d="M0 13 L5 6 L8.5 10 L10 8.5 L13 11.5 V13 Z" fill="#0b3f8a"/><circle cx="9.5" cy="3.5" r="1.2" fill="#fff"/></svg>
<svg style="left:420.00px;top:557.00px;" width="14" height="14" viewBox="0 0 14 14"><path d="M4.5 4 V2 Q4.5 0.6 7 0.6 Q9.5 0.6 9.5 2 V4" fill="none" stroke="#fff" stroke-width="1"/><rect x="0.5" y="3.5" width="13" height="10.5" fill="#fff"/><rect x="4.6" y="6.3" width="2.1" height="2.1" fill="#f25022"/><rect x="7.2" y="6.3" width="2.1" height="2.1" fill="#7fba00"/><rect x="4.6" y="8.9" width="2.1" height="2.1" fill="#00a4ef"/><rect x="7.2" y="8.9" width="2.1" height="2.1" fill="#ffb900"/></svg>
<svg style="left:446.00px;top:557.00px;" width="14.5" height="14.5" viewBox="0 0 14.5 14.5"><circle cx="7.25" cy="7.25" r="7" fill="#1b8fd6"/><path d="M7.2 0.3 A7 7 0 0 1 14.2 7.6 Q12.5 4 8 4.8 Q4 5.8 5 9.5 Q6 12.5 10.5 12.8 A7 7 0 0 1 0.4 6.5 Q1.5 0.3 7.2 0.3 Z" fill="#3fc46a" fill-opacity="0.85"/><path d="M5 8.5 Q5.5 4.5 10 5.3 Q13 6 14 8 Q13.5 10 11 9.5 H7.5 Q7.5 11.5 10.5 12.8 A7 7 0 0 1 5 8.5 Z" fill="#0c5fa8"/></svg>
<svg style="left:472.00px;top:557.00px;" width="13.5" height="14" viewBox="0 0 13.5 14"><path d="M3 0.5 L13 2 L10.5 13.5 L0.5 12 Z" fill="#cfe8f2"/><path d="M3 0.5 L13 2 L12.5 4 L2.5 2.6 Z" fill="#7fb7d1"/><path d="M10.5 13.5 L13 2 L13.2 3.5 L11 13.8 Z" fill="#e0e0e0"/></svg>
<svg style="left:498.30px;top:558.00px;" width="13" height="13" viewBox="0 0 13 13"><circle cx="6.5" cy="6.5" r="6.4" fill="#ffe600"/></svg>
<div class="a" style="left:494.70px;top:574.50px;width:20.30px;height:1.50px;background:#9ccbe8"></div>
<svg style="left:525.00px;top:558.00px;" width="12" height="13" viewBox="0 0 12 13"><path d="M6 0.5 L7.5 4.5 L11.8 4.8 L8.4 7.5 L9.6 11.8 L6 9.4 L2.4 11.8 L3.6 7.5 L0.2 4.8 L4.5 4.5 Z" fill="#a8b8e6"/><path d="M6.5 5.5 L11 10 L9 10 L10 12.5 L9 13 L8 10.5 L6.5 12 Z" fill="#fff"/></svg>
<svg style="left:548.60px;top:557.50px;" width="14.8" height="13.5" viewBox="0 0 14.8 13.5"><path d="M0 5 L7.4 0 L14.8 5 V13.5 H0 Z" fill="#1e7fd8"/><path d="M0 5 L7.4 10 L14.8 5 V6.5 L7.4 11.5 L0 6.5 Z" fill="#fff"/><path d="M0 13.5 L7.4 8 L14.8 13.5 Z" fill="#4fa9ef"/></svg>
<div class="a" style="left:573.50px;top:557.00px;width:16.00px;height:14.00px;background:#2d3e47"></div>
<svg style="left:576.00px;top:558.50px;" width="11" height="11" viewBox="0 0 11 11"><circle cx="3.5" cy="2.5" r="1.8" fill="#fff"/><path d="M5 4.5 L10 9 L7 11 L2.5 6.5 Z" fill="#2fd3b5"/></svg>
<div class="a" style="left:572.00px;top:574.50px;width:20.00px;height:1.50px;background:#9ccbe8"></div>
<div class="a" style="left:595.50px;top:552.90px;width:24.20px;height:23.10px;background:#3d4f59"></div>
<svg style="left:600.00px;top:557.00px;" width="14.2" height="14" viewBox="0 0 14.2 14"><rect x="3" y="0" width="11.2" height="14" rx="1" fill="#1d7044"/><rect x="3" y="0" width="11.2" height="4.6" fill="#33a06a"/><rect x="3" y="9.3" width="11.2" height="4.7" fill="#155a36"/><rect x="0" y="3" width="8" height="8" rx="0.8" fill="#107c41"/><path d="M2.3 4.8 L5.7 9.2 M5.7 4.8 L2.3 9.2" stroke="#fff" stroke-width="1"/></svg>
<div class="a" style="left:595.50px;top:574.50px;width:24.20px;height:1.50px;background:#9ccbe8"></div>
<svg style="left:626.70px;top:558.00px;" width="13.5" height="12.5" viewBox="0 0 13.5 12.5"><rect x="0" y="1" width="9.5" height="8" rx="1.5" fill="#29a8d8"/><path d="M9.5 3.5 L13.5 1 V9 L9.5 6.5 Z" fill="#29a8d8"/><circle cx="4.7" cy="5" r="2" fill="#ff3535" stroke="#fff" stroke-width="0.8"/><path d="M4.7 9 V11.5 M2.5 12 H7" stroke="#29a8d8" stroke-width="0.9"/></svg>
<div class="a" style="left:622.80px;top:574.50px;width:21.20px;height:1.50px;background:#9ccbe8"></div>
<svg style="left:662.60px;top:559.00px;" width="12" height="11" viewBox="0 0 12 11"><circle cx="5" cy="5.5" r="5" fill="#f7c744"/><path d="M4 10.5 Q3 7.5 6 7.5 Q7 5.5 9 6.5 Q11.5 6.5 11.5 8.8 Q11.5 10.5 9.5 10.5 Z" fill="#d8e6f2"/></svg>
<div class="t" id="m200" style="left:679.80px;top:560.60px;font-size:8px;line-height:9.60px;color:#eee;;transform-origin:0 50%;transform:scaleX(0.9167);">21°C</div>
<svg style="left:727.00px;top:561.50px;" width="8" height="8" viewBox="0 0 8 8"><path d="M0.5 2.5 H2.5 L5 0.5 V7.5 L2.5 5.5 H0.5 Z" fill="none" stroke="#bbb" stroke-width="0.7"/></svg>
<svg style="left:748.00px;top:562.00px;" width="8" height="5" viewBox="0 0 8 5"><rect x="0.5" y="0.5" width="6.5" height="4" fill="none" stroke="#aaa" stroke-width="0.7"/></svg>
<div class="a" style="left:766.00px;top:564.50px;width:8.00px;height:3.00px;background:#f4f4f4"></div>
<svg style="left:785.00px;top:563.00px;" width="6" height="6" viewBox="0 0 6 6"><circle cx="3" cy="3" r="2.8" fill="#d83a2a"/></svg>
<div class="t" id="m201" style="left:840.80px;top:561.00px;font-size:8px;line-height:9.60px;color:#eee;font-family:'Liberation Serif',serif;transform-origin:0 50%;transform:scaleX(0.8333);">A</div>
<svg style="left:860.00px;top:560.00px;" width="11" height="11" viewBox="0 0 11 11"><circle cx="4.5" cy="4.5" r="4.5" fill="#1e7ed8"/><circle cx="8" cy="8" r="2.3" fill="#f2c230"/><circle cx="8.5" cy="7.5" r="1.3" fill="#e54848"/></svg>
<div class="t" id="m202" style="left:883.40px;top:555.38px;font-size:7.2px;line-height:8.64px;color:#eee;;transform-origin:0 50%;transform:scaleX(0.9167);">16:44</div>
<div class="t" id="m203" style="left:873.20px;top:565.86px;font-size:7.4px;line-height:8.88px;color:#eee;;transform-origin:0 50%;transform:scaleX(0.9730);">2021/10/28</div>
<svg style="left:920.00px;top:560.50px;" width="10" height="9" viewBox="0 0 10 9"><path d="M0.5 0.5 H9.5 V6.5 H5 L3 8.5 V6.5 H0.5 Z" fill="none" stroke="#eee" stroke-width="0.8"/></svg>
<div class="t" id="m204" style="left:705.50px;top:553.00px;font-size:20.5px;line-height:24.60px;color:rgba(255,255,255,0.88);text-shadow:0 0 1px rgba(0,0,0,0.4);transform-origin:0 50%;transform:scaleX(0.9591);">© 2021 saym.</div>
</body></html>
